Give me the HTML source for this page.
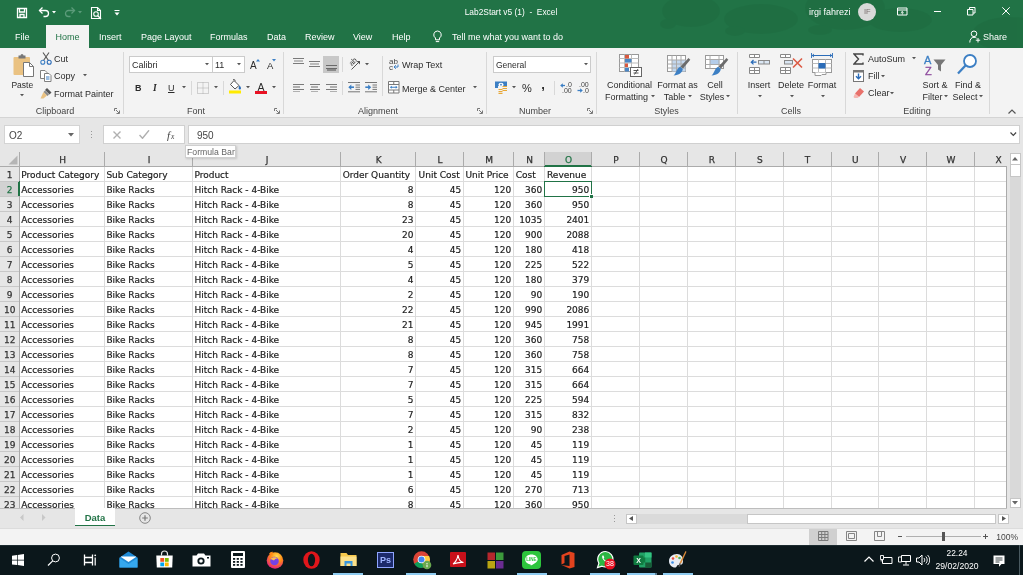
<!DOCTYPE html>
<html><head><meta charset="utf-8"><title>Lab2Start v5 (1) - Excel</title><style>
html,body{margin:0;padding:0;}
body{width:1023px;height:575px;overflow:hidden;position:relative;background:#e6e6e6;font-family:"Liberation Sans",sans-serif;}
.t{position:absolute;white-space:pre;}
.r{position:absolute;display:block;}
#w{position:absolute;left:0;top:0;width:1023px;height:575px;overflow:hidden;will-change:transform;opacity:0.999;}
</style></head><body><div id="w">
<div class="r" style="left:0px;top:0px;width:1023px;height:48px;background:#217346;"></div>
<svg class="r" style="left:0;top:0" width="1023" height="48" viewBox="0 0 1023 48"><g fill="#1d6a3f" opacity="0.450"><ellipse cx="691" cy="11" rx="29" ry="16"/><ellipse cx="668" cy="24" rx="8" ry="5"/><ellipse cx="761" cy="19" rx="37" ry="15"/><ellipse cx="735" cy="31" rx="10" ry="5"/><ellipse cx="845" cy="8" rx="40" ry="22"/><ellipse cx="900" cy="20" rx="32" ry="12"/><ellipse cx="820" cy="30" rx="12" ry="5"/><ellipse cx="1010" cy="34" rx="38" ry="17"/></g></svg>
<svg class="r" style="left:16px;top:7px;" width="12" height="12" viewBox="0 0 12 12"><path d="M1.5 1.5h9v9h-9z M3.5 1.5v3.5h5v-3.5 M4 10.5v-3h4v3" fill="none" stroke="#fff" stroke-width="1.300"/></svg>
<svg class="r" style="left:38px;top:6px;" width="13" height="12" viewBox="0 0 13 12"><path d="M1.5 4.5h6a3 3 0 0 1 0 6h-2" fill="none" stroke="#fff" stroke-width="1.3"/><path d="M4.5 1.5l-3 3 3 3" fill="none" stroke="#fff" stroke-width="1.3"/></svg>
<svg class="r" style="left:52px;top:11px;" width="5" height="3" viewBox="0 0 5 3"><path d="M0 0h4l-2 2.5z" fill="#fff"/></svg>
<svg class="r" style="left:63px;top:6px;" width="13" height="12" viewBox="0 0 13 12"><path d="M11.5 4.5h-6a3 3 0 0 0 0 6h2" fill="none" stroke="#5b9b7a" stroke-width="1.3"/><path d="M8.5 1.5l3 3-3 3" fill="none" stroke="#5b9b7a" stroke-width="1.3"/></svg>
<svg class="r" style="left:78px;top:11px;" width="5" height="3" viewBox="0 0 5 3"><path d="M0 0h4l-2 2.5z" fill="#5b9b7a"/></svg>
<svg class="r" style="left:90px;top:6px;" width="13" height="14" viewBox="0 0 13 14"><path d="M1.5 1.5h6l3 3v8h-9z M7.5 1.5v3h3" fill="none" stroke="#fff" stroke-width="1.1"/><circle cx="6" cy="8" r="2.3" fill="none" stroke="#fff" stroke-width="1.1"/><path d="M7.8 9.8l3.2 3.2" stroke="#fff" stroke-width="1.3"/></svg>
<svg class="r" style="left:114px;top:10px;" width="6" height="6" viewBox="0 0 6 6"><path d="M0.5 0.5h5" stroke="#fff" stroke-width="1"/><path d="M0.5 2.5h5l-2.5 3z" fill="#fff"/></svg>
<div class="t" style="top:6.00px;font-size:8.4px;line-height:12px;color:#fff;left:411.00px;width:200px;text-align:center;">Lab2Start v5 (1)  -  Excel</div>
<div class="t" style="top:6.00px;font-size:9px;line-height:12px;color:#fff;left:809.00px;">irgi fahrezi</div>
<div class="r" style="left:858px;top:3px;width:18px;height:18px;border-radius:9px;background:#d9d9d9;"></div>
<div class="t" style="top:6.00px;font-size:7.5px;line-height:12px;color:#7a6e6e;left:767.30px;width:200px;text-align:center;">IF</div>
<svg class="r" style="left:896.5px;top:6.5px;" width="11" height="9" viewBox="0 0 11 9"><path d="M0.500 1h9.500v7h-9.500z M0.500 3h9.500" fill="none" stroke="#fff" stroke-width="1"/><path d="M5.250 4.500v3 M3.800 5.900l1.450-1.400 1.450 1.400" fill="none" stroke="#fff" stroke-width="0.900"/></svg>
<div class="r" style="left:933.5px;top:10.5px;width:7.5px;height:1px;background:#fff;"></div>
<svg class="r" style="left:967px;top:6.8px;" width="9" height="9" viewBox="0 0 9 9"><path d="M0.500 2.500h5.500v5.500h-5.500z M2.500 2.500v-2h5.500v5.500h-2" fill="none" stroke="#fff" stroke-width="1"/></svg>
<svg class="r" style="left:1002px;top:7.3px;" width="8" height="8" viewBox="0 0 8 8"><path d="M0.300 0.300l7.400 7.400M7.700 0.300l-7.400 7.400" stroke="#fff" stroke-width="1"/></svg>
<div class="r" style="left:46px;top:25px;width:43px;height:23px;background:#f3f3f3;"></div>
<div class="t" style="top:31.00px;font-size:9px;line-height:12px;color:#fff;left:15.00px;">File</div>
<div class="t" style="top:31.00px;font-size:9px;line-height:12px;color:#fff;left:99.00px;">Insert</div>
<div class="t" style="top:31.00px;font-size:9px;line-height:12px;color:#fff;left:141.00px;">Page Layout</div>
<div class="t" style="top:31.00px;font-size:9px;line-height:12px;color:#fff;left:210.00px;">Formulas</div>
<div class="t" style="top:31.00px;font-size:9px;line-height:12px;color:#fff;left:267.00px;">Data</div>
<div class="t" style="top:31.00px;font-size:9px;line-height:12px;color:#fff;left:305.00px;">Review</div>
<div class="t" style="top:31.00px;font-size:9px;line-height:12px;color:#fff;left:353.00px;">View</div>
<div class="t" style="top:31.00px;font-size:9px;line-height:12px;color:#fff;left:392.00px;">Help</div>
<div class="t" style="top:31.00px;font-size:9px;line-height:12px;color:#217346;left:-32.50px;width:200px;text-align:center;">Home</div>
<svg class="r" style="left:432px;top:30px;" width="11" height="13" viewBox="0 0 11 13"><path d="M5.5 1a3.8 3.8 0 0 0-2 7v1.8h4v-1.8a3.8 3.8 0 0 0-2-7z M3.8 11.6h3.4" fill="none" stroke="#fff" stroke-width="1"/></svg>
<div class="t" style="top:31.00px;font-size:9px;line-height:12px;color:#fff;left:452.00px;">Tell me what you want to do</div>
<svg class="r" style="left:969px;top:30px;" width="12" height="13" viewBox="0 0 12 13"><circle cx="5" cy="3.8" r="2.8" fill="none" stroke="#fff" stroke-width="1"/><path d="M0.8 12.5c0-3.5 1.8-5.2 4.2-5.2 1 0 1.8 0.3 2.5 0.8" fill="none" stroke="#fff" stroke-width="1"/><path d="M9 8v4.5M6.8 10.2h4.4" stroke="#fff" stroke-width="1"/></svg>
<div class="t" style="top:31.00px;font-size:9px;line-height:12px;color:#fff;left:983.00px;">Share</div>
<div class="r" style="left:0px;top:48px;width:1023px;height:69px;background:#f3f3f3;"></div>
<div class="r" style="left:0px;top:117px;width:1023px;height:1px;background:#d4d4d4;"></div>
<div class="r" style="left:0px;top:118px;width:1023px;height:34px;background:#e6e6e6;"></div>
<div class="r" style="left:4px;top:125px;width:76px;height:19px;background:#fff;border:1px solid #d4d4d4;box-sizing:border-box;"></div>
<div class="t" style="top:130.00px;font-size:10px;line-height:12px;color:#444;left:9.00px;-webkit-text-stroke:0;">O2</div>
<svg class="r" style="left:68px;top:133px;" width="6" height="4" viewBox="0 0 6 4"><path d="M0 0h6l-3 3.5z" fill="#666"/></svg>
<div class="r" style="left:91px;top:131px;width:1px;height:1px;background:#999;"></div>
<div class="r" style="left:91px;top:134px;width:1px;height:1px;background:#999;"></div>
<div class="r" style="left:91px;top:137px;width:1px;height:1px;background:#999;"></div>
<div class="r" style="left:103px;top:125px;width:82px;height:19px;background:#fff;border:1px solid #d0d0d0;box-sizing:border-box;"></div>
<svg class="r" style="left:113px;top:131px;" width="8" height="8" viewBox="0 0 8 8"><path d="M0.5 0.5l7 7M7.5 0.5l-7 7" stroke="#b0b0b0" stroke-width="1.400"/></svg>
<svg class="r" style="left:139px;top:130px;" width="11" height="9" viewBox="0 0 11 9"><path d="M0.500 5l3 3.300 6.500-8" fill="none" stroke="#b0b0b0" stroke-width="1.400"/></svg>
<div class="t" style="top:129.00px;font-size:11px;line-height:12px;color:#444;left:167.00px;font-family:'Liberation Serif',serif;font-style:italic;">f</div>
<div class="t" style="top:131.00px;font-size:7.5px;line-height:12px;color:#444;left:171.00px;font-family:'Liberation Serif',serif;font-style:italic;">x</div>
<div class="r" style="left:188px;top:125px;width:832px;height:19px;background:#fff;border:1px solid #d0d0d0;box-sizing:border-box;"></div>
<div class="t" style="top:130.00px;font-size:10px;line-height:12px;color:#444;left:197.00px;-webkit-text-stroke:0;">950</div>
<svg class="r" style="left:1009.5px;top:132px;" width="7" height="5" viewBox="0 0 7 5"><path d="M0.500 0.500l2.800 2.800 2.800-2.800" fill="none" stroke="#444" stroke-width="1.200"/></svg>
<div class="r" style="left:123px;top:52px;width:1px;height:62px;background:#d8d8d8;"></div>
<div class="r" style="left:283px;top:52px;width:1px;height:62px;background:#d8d8d8;"></div>
<div class="r" style="left:486px;top:52px;width:1px;height:62px;background:#d8d8d8;"></div>
<div class="r" style="left:596px;top:52px;width:1px;height:62px;background:#d8d8d8;"></div>
<div class="r" style="left:737px;top:52px;width:1px;height:62px;background:#d8d8d8;"></div>
<div class="r" style="left:845px;top:52px;width:1px;height:62px;background:#d8d8d8;"></div>
<div class="r" style="left:989px;top:52px;width:1px;height:62px;background:#d8d8d8;"></div>
<div class="t" style="top:105.00px;font-size:9px;line-height:12px;color:#444;left:-45.00px;width:200px;text-align:center;">Clipboard</div>
<div class="t" style="top:105.00px;font-size:9px;line-height:12px;color:#444;left:96.00px;width:200px;text-align:center;">Font</div>
<div class="t" style="top:105.00px;font-size:9px;line-height:12px;color:#444;left:278.00px;width:200px;text-align:center;">Alignment</div>
<div class="t" style="top:105.00px;font-size:9px;line-height:12px;color:#444;left:435.00px;width:200px;text-align:center;">Number</div>
<div class="t" style="top:105.00px;font-size:9px;line-height:12px;color:#444;left:566.50px;width:200px;text-align:center;">Styles</div>
<div class="t" style="top:105.00px;font-size:9px;line-height:12px;color:#444;left:691.00px;width:200px;text-align:center;">Cells</div>
<div class="t" style="top:105.00px;font-size:9px;line-height:12px;color:#444;left:817.00px;width:200px;text-align:center;">Editing</div>
<svg class="r" style="left:114px;top:108px;" width="6" height="6" viewBox="0 0 6 6"><path d="M0.5 3v-2.5h2.5" fill="none" stroke="#777" stroke-width="1"/><path d="M2 2l3 3M5.5 2.5v3h-3" fill="none" stroke="#777" stroke-width="1"/></svg>
<svg class="r" style="left:274px;top:108px;" width="6" height="6" viewBox="0 0 6 6"><path d="M0.5 3v-2.5h2.5" fill="none" stroke="#777" stroke-width="1"/><path d="M2 2l3 3M5.5 2.5v3h-3" fill="none" stroke="#777" stroke-width="1"/></svg>
<svg class="r" style="left:477px;top:108px;" width="6" height="6" viewBox="0 0 6 6"><path d="M0.5 3v-2.5h2.5" fill="none" stroke="#777" stroke-width="1"/><path d="M2 2l3 3M5.5 2.5v3h-3" fill="none" stroke="#777" stroke-width="1"/></svg>
<svg class="r" style="left:587px;top:108px;" width="6" height="6" viewBox="0 0 6 6"><path d="M0.5 3v-2.5h2.5" fill="none" stroke="#777" stroke-width="1"/><path d="M2 2l3 3M5.5 2.5v3h-3" fill="none" stroke="#777" stroke-width="1"/></svg>
<svg class="r" style="left:1008px;top:109px;" width="8" height="5" viewBox="0 0 8 5"><path d="M0.5 4.5l3.5-3.5 3.5 3.5" fill="none" stroke="#555" stroke-width="1.2"/></svg>
<svg class="r" style="left:13px;top:53px;" width="22" height="25" viewBox="0 0 22 25"><rect x="0.500" y="4" width="16.500" height="18" rx="1" fill="#eac282"/>
<path d="M5.500 5.500v-3h2a1.500 1.500 0 0 1 3 0h2v3z" fill="#777"/>
<path d="M10.500 9.500h6l4 4v10h-10z" fill="#fff" stroke="#777" stroke-width="1"/><path d="M16.500 9.500v4h4" fill="none" stroke="#777" stroke-width="1"/></svg>
<div class="t" style="top:79.00px;font-size:8.5px;line-height:12px;color:#2b2b2b;left:-77.70px;width:200px;text-align:center;">Paste</div>
<svg class="r" style="left:19.5px;top:94.2px;" width="4" height="2.5" viewBox="0 0 4 2.5"><path d="M0 0h4l-2 2.300z" fill="#555"/></svg>
<svg class="r" style="left:40px;top:52px;" width="12" height="13" viewBox="0 0 12 13"><path d="M3 0.5l5.5 8M9 0.5l-5.5 8" stroke="#555" stroke-width="1.1" fill="none"/>
<circle cx="2.8" cy="10.2" r="2" fill="none" stroke="#3c7fc4" stroke-width="1.1"/><circle cx="9.2" cy="10.2" r="2" fill="none" stroke="#2b6cb8" stroke-width="1.1"/></svg>
<div class="t" style="top:53.00px;font-size:9px;line-height:12px;color:#2b2b2b;left:54.00px;">Cut</div>
<svg class="r" style="left:40px;top:70px;" width="12" height="13" viewBox="0 0 12 13"><path d="M0.500 0.500h4.500l2 2v6h-6.500z" fill="#fff" stroke="#808080" stroke-width="1"/>
<path d="M4.500 3.500h4.500l2 2v6h-6.500z" fill="#fff" stroke="#808080" stroke-width="1"/><path d="M6 7h3.500M6 9h3.500" stroke="#3c7fc4" stroke-width="1"/></svg>
<div class="t" style="top:70.00px;font-size:9px;line-height:12px;color:#2b2b2b;left:54.00px;">Copy</div>
<svg class="r" style="left:82.5px;top:74.2px;" width="4" height="2.5" viewBox="0 0 4 2.5"><path d="M0 0h4l-2 2.300z" fill="#555"/></svg>
<svg class="r" style="left:40px;top:87px;" width="13" height="12" viewBox="0 0 13 12"><path d="M7 1l4.5 4.5-2 2L5 3z" fill="#555"/><path d="M5 3.5l4 4-1.5 1.5-4-4z" fill="#888"/><path d="M3.5 5l3.5 3.5-3.5 3h-3z" fill="#eac282"/></svg>
<div class="t" style="top:88.00px;font-size:9px;line-height:12px;color:#2b2b2b;left:54.00px;">Format Painter</div>
<div class="r" style="left:129px;top:56px;width:84px;height:17px;background:#fff;border:1px solid #cbcbcb;box-sizing:border-box;"></div>
<div class="r" style="left:213px;top:56px;width:32px;height:17px;background:#fff;border:1px solid #cbcbcb;border-left:none;box-sizing:border-box;"></div>
<div class="t" style="top:59.00px;font-size:9px;line-height:12px;color:#2b2b2b;left:132.00px;">Calibri</div>
<svg class="r" style="left:204.5px;top:63.2px;" width="4" height="2.5" viewBox="0 0 4 2.5"><path d="M0 0h4l-2 2.300z" fill="#555"/></svg>
<div class="t" style="top:59.00px;font-size:9px;line-height:12px;color:#2b2b2b;left:215.00px;">11</div>
<svg class="r" style="left:236.5px;top:63.2px;" width="4" height="2.5" viewBox="0 0 4 2.5"><path d="M0 0h4l-2 2.300z" fill="#555"/></svg>
<div class="t" style="top:60.00px;font-size:10px;line-height:12px;color:#2b2b2b;left:250.00px;">A</div>
<svg class="r" style="left:255.8px;top:59.3px;" width="4" height="2.5" viewBox="0 0 4 2.5"><path d="M0 2.500l2-2.500 2 2.500z" fill="#3c7fc4"/></svg>
<div class="t" style="top:60.00px;font-size:9.5px;line-height:12px;color:#2b2b2b;left:267.00px;">A</div>
<svg class="r" style="left:271.8px;top:59.3px;" width="4" height="2.5" viewBox="0 0 4 2.5"><path d="M0 0h4l-2 2.500z" fill="#3c7fc4"/></svg>
<div class="t" style="top:82.00px;font-size:9px;line-height:12px;color:#2b2b2b;left:135.00px;font-weight:bold;">B</div>
<div class="t" style="top:82.00px;font-size:9.5px;line-height:12px;color:#2b2b2b;left:153.00px;font-family:'Liberation Serif',serif;font-style:italic;font-weight:bold;">I</div>
<div class="t" style="top:82.00px;font-size:9px;line-height:12px;color:#2b2b2b;left:168.00px;text-decoration:underline;">U</div>
<svg class="r" style="left:181.5px;top:86.2px;" width="4" height="2.5" viewBox="0 0 4 2.5"><path d="M0 0h4l-2 2.300z" fill="#555"/></svg>
<div class="r" style="left:191px;top:81px;width:1px;height:14px;background:#d8d8d8;"></div>
<svg class="r" style="left:197px;top:82px;" width="12" height="12" viewBox="0 0 12 12"><path d="M0.5 0.5h11v11h-11z M6 0.5v11 M0.5 6h11" fill="none" stroke="#aaa" stroke-width="1" stroke-dasharray="1 1"/></svg>
<svg class="r" style="left:213.5px;top:86.2px;" width="4" height="2.5" viewBox="0 0 4 2.5"><path d="M0 0h4l-2 2.300z" fill="#555"/></svg>
<div class="r" style="left:223px;top:81px;width:1px;height:14px;background:#d8d8d8;"></div>
<svg class="r" style="left:229px;top:79px;" width="13" height="15" viewBox="0 0 13 15"><path d="M5 1.5l5 5-4 3.5-4.500-4.500z" fill="#fff" stroke="#555" stroke-width="1"/><path d="M4 0.500c1.500-0.5 2.500 0.500 2 2" fill="none" stroke="#555" stroke-width="0.9"/><path d="M10.500 6.500c1 1.200 1.500 2 1.500 2.800a1.200 1.200 0 0 1-2.400 0c0-0.800 0.400-1.600 0.900-2.800z" fill="#2b6cb8"/><rect x="0" y="11.500" width="12" height="3" fill="#ffeb00"/></svg>
<svg class="r" style="left:245.5px;top:86.2px;" width="4" height="2.5" viewBox="0 0 4 2.5"><path d="M0 0h4l-2 2.300z" fill="#555"/></svg>
<div class="t" style="top:81.00px;font-size:10.5px;line-height:12px;color:#2b2b2b;left:161.00px;width:200px;text-align:center;">A</div>
<div class="r" style="left:255px;top:90.7px;width:12px;height:3px;background:#e81123;"></div>
<svg class="r" style="left:271.5px;top:86.2px;" width="4" height="2.5" viewBox="0 0 4 2.5"><path d="M0 0h4l-2 2.300z" fill="#555"/></svg>
<div class="r" style="left:293px;top:58px;width:10.5px;height:1px;background:#7a7a7a;"></div><div class="r" style="left:294px;top:60px;width:8.5px;height:2px;background:#bcbcbc;"></div><div class="r" style="left:293px;top:63px;width:10.5px;height:1px;background:#7a7a7a;"></div>
<div class="r" style="left:309px;top:61px;width:10.5px;height:1px;background:#7a7a7a;"></div><div class="r" style="left:310px;top:63px;width:8.5px;height:2px;background:#bcbcbc;"></div><div class="r" style="left:309px;top:66px;width:10.5px;height:1px;background:#7a7a7a;"></div>
<div class="r" style="left:323px;top:56px;width:16px;height:17px;background:#c8c8c8;"></div>
<div class="r" style="left:325.5px;top:65px;width:11px;height:1px;background:#6a6a6a;"></div><div class="r" style="left:325.5px;top:67.5px;width:11px;height:1px;background:#6a6a6a;"></div><div class="r" style="left:326.5px;top:69px;width:9px;height:2px;background:#8a8a8a;"></div>
<div class="r" style="left:342px;top:57px;width:1px;height:15px;background:#d8d8d8;"></div>
<div class="t" style="top:58.00px;font-size:7.5px;line-height:8px;color:#444;left:349.00px;transform:rotate(-45deg);transform-origin:50% 50%;">ab</div>
<svg class="r" style="left:348px;top:57px;" width="14" height="14" viewBox="0 0 14 14"><path d="M3.500 12.500l8-8" stroke="#555" stroke-width="1"/><path d="M12 7.500v-3.500h-3.500z" fill="#555"/></svg>
<svg class="r" style="left:364.5px;top:63.2px;" width="4" height="2.5" viewBox="0 0 4 2.5"><path d="M0 0h4l-2 2.300z" fill="#555"/></svg>
<div class="r" style="left:382px;top:56px;width:1px;height:40px;background:#d8d8d8;"></div>
<div class="t" style="top:58.00px;font-size:8px;line-height:7px;color:#444;left:389.00px;">ab</div>
<div class="t" style="top:64.00px;font-size:8px;line-height:7px;color:#444;left:389.00px;">c</div>
<svg class="r" style="left:393px;top:64px;" width="6" height="6" viewBox="0 0 6 6"><path d="M5 0.500v2.500h-3.500" fill="none" stroke="#3c7fc4" stroke-width="1"/><path d="M2.800 1.200l-1.800 1.800 1.800 1.800" fill="none" stroke="#3c7fc4" stroke-width="1"/></svg>
<div class="t" style="top:59.00px;font-size:9px;line-height:12px;color:#2b2b2b;left:402.00px;">Wrap Text</div>
<div class="r" style="left:293px;top:84.0px;width:10.5px;height:1px;background:#7a7a7a;"></div><div class="r" style="left:293px;top:86.25px;width:7px;height:1.3px;background:#b0b0b0;"></div><div class="r" style="left:293px;top:88.5px;width:10.5px;height:1px;background:#7a7a7a;"></div><div class="r" style="left:293px;top:90.75px;width:7px;height:1.5px;background:#b0b0b0;"></div>
<div class="r" style="left:309.5px;top:84.0px;width:10.5px;height:1px;background:#7a7a7a;"></div><div class="r" style="left:311.25px;top:86.25px;width:7px;height:1.3px;background:#b0b0b0;"></div><div class="r" style="left:309.5px;top:88.5px;width:10.5px;height:1px;background:#7a7a7a;"></div><div class="r" style="left:311.25px;top:90.75px;width:7px;height:1.5px;background:#b0b0b0;"></div>
<div class="r" style="left:326.0px;top:84.0px;width:10.5px;height:1px;background:#7a7a7a;"></div><div class="r" style="left:329.5px;top:86.25px;width:7px;height:1.3px;background:#b0b0b0;"></div><div class="r" style="left:326.0px;top:88.5px;width:10.5px;height:1px;background:#7a7a7a;"></div><div class="r" style="left:329.5px;top:90.75px;width:7px;height:1.5px;background:#b0b0b0;"></div>
<div class="r" style="left:342px;top:81px;width:1px;height:14px;background:#d8d8d8;"></div>
<svg class="r" style="left:348px;top:82px;" width="12" height="11" viewBox="0 0 12 11"><path d="M0 0.500h12M7.500 3h4.500M7.500 5.200h4.500M7.500 7.400h4.500M0 9.800h12" stroke="#777" stroke-width="1"/><path d="M6 5.200h-4.500" stroke="#3c7fc4" stroke-width="1.600"/><path d="M3.300 2.500l-3 2.700 3 2.700z" fill="#3c7fc4"/></svg>
<svg class="r" style="left:365px;top:82px;" width="12" height="11" viewBox="0 0 12 11"><path d="M0 0.500h12M7.500 3h4.500M7.500 5.200h4.500M7.500 7.400h4.500M0 9.800h12" stroke="#777" stroke-width="1"/><path d="M0.300 5.200h4.500" stroke="#3c7fc4" stroke-width="1.600"/><path d="M3.200 2.500l3 2.700-3 2.700z" fill="#3c7fc4"/></svg>
<svg class="r" style="left:388px;top:81px;" width="12" height="13" viewBox="0 0 12 13"><path d="M0.500 0.500h10.500v11.500h-10.500z M0.500 3.500h10.500 M0.500 9h10.500 M5.750 0.500v3 M5.750 9v3" fill="#fff" stroke="#7a7a7a" stroke-width="1"/><path d="M2.500 6.250h6.500" stroke="#3c7fc4" stroke-width="1"/><path d="M3.800 4.700l-1.800 1.550 1.800 1.550zM7.700 4.700l1.800 1.550-1.800 1.550z" fill="#3c7fc4"/></svg>
<div class="t" style="top:83.00px;font-size:9px;line-height:12px;color:#2b2b2b;left:402.00px;">Merge &amp; Center</div>
<svg class="r" style="left:472.5px;top:86.2px;" width="4" height="2.5" viewBox="0 0 4 2.5"><path d="M0 0h4l-2 2.300z" fill="#555"/></svg>
<div class="r" style="left:493px;top:56px;width:98px;height:17px;background:#fff;border:1px solid #cbcbcb;box-sizing:border-box;"></div>
<div class="t" style="top:59.00px;font-size:8.5px;line-height:12px;color:#2b2b2b;left:496.00px;">General</div>
<svg class="r" style="left:583.5px;top:63.2px;" width="4" height="2.5" viewBox="0 0 4 2.5"><path d="M0 0h4l-2 2.300z" fill="#555"/></svg>
<svg class="r" style="left:495px;top:81px;" width="13" height="13" viewBox="0 0 13 13"><rect x="0" y="0.500" width="12" height="6.500" fill="#3c7fc4"/><ellipse cx="6" cy="3.700" rx="2.600" ry="2" fill="#fff"/><circle cx="6" cy="3.700" r="0.900" fill="#3c7fc4"/><rect x="3" y="5" width="9" height="7.500" fill="#f3f3f3"/><path d="M7.500 5.500h4.500M7.500 7.500h4.500M7.500 9.500h4.500M3.500 8.500h4M3.500 10.500h4M3.500 12.300h4" stroke="#e8a838" stroke-width="1.200"/></svg>
<svg class="r" style="left:511.5px;top:86.2px;" width="4" height="2.5" viewBox="0 0 4 2.5"><path d="M0 0h4l-2 2.300z" fill="#555"/></svg>
<div class="t" style="top:82.00px;font-size:11px;line-height:12px;color:#2b2b2b;left:427.00px;width:200px;text-align:center;">%</div>
<div class="t" style="top:79.00px;font-size:13px;line-height:12px;color:#2b2b2b;left:443.00px;width:200px;text-align:center;font-weight:bold;">,</div>
<div class="r" style="left:554px;top:81px;width:1px;height:14px;background:#d8d8d8;"></div>
<svg class="r" style="left:560px;top:82.5px;" width="6" height="5" viewBox="0 0 6 5"><path d="M5 2.500h-3.500" stroke="#3c7fc4" stroke-width="1.300"/><path d="M2.800 0.300l-2.600 2.200 2.600 2.200z" fill="#3c7fc4"/></svg>
<div class="t" style="top:82.00px;font-size:7px;line-height:6px;color:#444;left:566.00px;-webkit-text-stroke:0;">.0</div>
<div class="t" style="top:88.00px;font-size:7px;line-height:6px;color:#444;left:562.00px;-webkit-text-stroke:0;">.00</div>
<svg class="r" style="left:576.5px;top:88px;" width="6" height="5" viewBox="0 0 6 5"><path d="M0.500 2.500h3.500" stroke="#3c7fc4" stroke-width="1.300"/><path d="M3.200 0.300l2.600 2.200-2.600 2.200z" fill="#3c7fc4"/></svg>
<div class="t" style="top:82.00px;font-size:7px;line-height:6px;color:#444;left:579.00px;-webkit-text-stroke:0;">.00</div>
<div class="t" style="top:88.00px;font-size:7px;line-height:6px;color:#444;left:583.00px;-webkit-text-stroke:0;">.0</div>
<svg class="r" style="left:619px;top:54px;" width="24" height="23" viewBox="0 0 24 23"><rect x="0.500" y="0.500" width="19" height="17" fill="#fff" stroke="#999"/>
<path d="M0.500 4.500h19M0.500 9h19M0.500 13.500h19M5.500 0.500v17M12.500 0.500v17" stroke="#bbb" stroke-width="1" fill="none"/>
<rect x="6" y="1" width="4" height="3.500" fill="#d9593f"/><rect x="6" y="5" width="6.500" height="3.500" fill="#4a86c5"/><rect x="6" y="9.500" width="3" height="3.500" fill="#d9593f"/><rect x="6" y="14" width="4" height="3.500" fill="#4a86c5"/>
<rect x="11.500" y="13.500" width="11" height="9" fill="#fff" stroke="#666"/><path d="M14.500 16.500h5M14.500 19h5M19 15l-3.500 5.500" stroke="#444" stroke-width="0.900"/></svg>
<div class="t" style="top:79.00px;font-size:9px;line-height:12px;color:#2b2b2b;left:529.50px;width:200px;text-align:center;">Conditional</div>
<div class="t" style="top:91.00px;font-size:9px;line-height:12px;color:#2b2b2b;left:526.50px;width:200px;text-align:center;">Formatting</div>
<svg class="r" style="left:650.5px;top:95.2px;" width="4" height="2.5" viewBox="0 0 4 2.5"><path d="M0 0h4l-2 2.300z" fill="#555"/></svg>
<svg class="r" style="left:667px;top:54px;" width="24" height="23" viewBox="0 0 24 23"><rect x="0.500" y="1.500" width="18" height="16" fill="#fff" stroke="#999"/>
<rect x="5" y="6" width="13.500" height="11.500" fill="#c3d7ee"/>
<path d="M0.500 6h18M0.500 10h18M0.500 14h18M5 1.500v16M9.500 1.500v16M14 1.500v16" stroke="#aaa" stroke-width="1" fill="none"/>
<path d="M21.500 4l1.800 1.800-7.300 8.700-2.500-2z" fill="#6b6b6b"/><path d="M13.200 12.800l2.600 2.200c-0.500 3.500-3.500 6-9.300 6.500 2.500-1.500 3-7 6.700-8.700z" fill="#3c7fc4"/></svg>
<div class="t" style="top:79.00px;font-size:9px;line-height:12px;color:#2b2b2b;left:577.50px;width:200px;text-align:center;">Format as</div>
<div class="t" style="top:91.00px;font-size:9px;line-height:12px;color:#2b2b2b;left:574.50px;width:200px;text-align:center;">Table</div>
<svg class="r" style="left:687.5px;top:95.2px;" width="4" height="2.5" viewBox="0 0 4 2.5"><path d="M0 0h4l-2 2.300z" fill="#555"/></svg>
<svg class="r" style="left:705px;top:54px;" width="24" height="23" viewBox="0 0 24 23"><rect x="0.500" y="1.500" width="18" height="13" fill="#fff" stroke="#999"/>
<rect x="5" y="5" width="9.500" height="6" fill="#b4cdea"/>
<path d="M0.500 5.500h18M0.500 10.500h18M5 1.500v13M14 1.500v13" stroke="#aaa" stroke-width="1" fill="none"/>
<path d="M21.500 4l1.800 1.800-7.300 8.700-2.500-2z" fill="#6b6b6b"/><path d="M13.200 12.800l2.600 2.200c-0.500 3.500-3.500 6-9.300 6.500 2.500-1.500 3-7 6.700-8.700z" fill="#3c7fc4"/></svg>
<div class="t" style="top:79.00px;font-size:9px;line-height:12px;color:#2b2b2b;left:615.00px;width:200px;text-align:center;">Cell</div>
<div class="t" style="top:91.00px;font-size:9px;line-height:12px;color:#2b2b2b;left:612.00px;width:200px;text-align:center;">Styles</div>
<svg class="r" style="left:726.0px;top:95.2px;" width="4" height="2.5" viewBox="0 0 4 2.5"><path d="M0 0h4l-2 2.300z" fill="#555"/></svg>
<svg class="r" style="left:749px;top:54px;" width="22" height="21" viewBox="0 0 22 21"><path d="M0.500 0.500h10v3h-10z M5.500 0.500v3 M0.500 13.500h10v6h-10z M5.500 13.500v6 M0.500 16.500h10" fill="#fff" stroke="#888"/>
<rect x="9.500" y="6.500" width="11" height="3.500" fill="#dbe7f4" stroke="#888"/><path d="M15 6.500v3.500" stroke="#888"/>
<path d="M7.500 8.200h-5M4.500 6l-2.200 2.200 2.200 2.200" fill="none" stroke="#2b6cb8" stroke-width="1.300"/></svg>
<div class="t" style="top:79.00px;font-size:9px;line-height:12px;color:#2b2b2b;left:659.00px;width:200px;text-align:center;">Insert</div>
<svg class="r" style="left:757.5px;top:95.2px;" width="4" height="2.5" viewBox="0 0 4 2.5"><path d="M0 0h4l-2 2.300z" fill="#555"/></svg>
<svg class="r" style="left:780px;top:54px;" width="23" height="21" viewBox="0 0 23 21"><path d="M0.500 0.500h10v3h-10z M5.500 0.500v3 M0.500 13.500h10v6h-10z M5.500 13.500v6 M0.500 16.500h10" fill="#fff" stroke="#888"/>
<rect x="4.500" y="6.500" width="8" height="3.500" fill="#dbe7f4" stroke="#888"/>
<path d="M13 4.500l9 9M22 4.500l-9 9" stroke="#dc5b45" stroke-width="1.600"/></svg>
<div class="t" style="top:79.00px;font-size:9px;line-height:12px;color:#2b2b2b;left:691.00px;width:200px;text-align:center;">Delete</div>
<svg class="r" style="left:789.5px;top:95.2px;" width="4" height="2.5" viewBox="0 0 4 2.5"><path d="M0 0h4l-2 2.300z" fill="#555"/></svg>
<svg class="r" style="left:811px;top:53px;" width="23" height="23" viewBox="0 0 23 23"><path d="M1 2.500h20" stroke="#2b6cb8" stroke-width="1"/><path d="M3 1l-1.800 1.500 1.800 1.500M19 1l1.800 1.500-1.800 1.500M0.500 0v5M21.500 0v5" fill="none" stroke="#2b6cb8" stroke-width="0.900"/>
<rect x="1.500" y="6.500" width="19" height="13" fill="#fff" stroke="#999"/><path d="M1.500 10.500h19M1.500 15h19M7.500 6.500v13M14.500 6.500v13" stroke="#bbb" fill="none"/>
<rect x="7.500" y="10" width="7" height="5.500" fill="#2b6cb8"/><path d="M4 19.500v3h6l1-1h4v-2" fill="#fff" stroke="#999"/></svg>
<div class="t" style="top:79.00px;font-size:9px;line-height:12px;color:#2b2b2b;left:722.00px;width:200px;text-align:center;">Format</div>
<svg class="r" style="left:820.5px;top:95.2px;" width="4" height="2.5" viewBox="0 0 4 2.5"><path d="M0 0h4l-2 2.300z" fill="#555"/></svg>
<svg class="r" style="left:853px;top:53px;" width="11" height="12" viewBox="0 0 11 12"><path d="M10 2.500v-1.500h-9l4.500 5-4.500 5h9v-1.500" fill="none" stroke="#444" stroke-width="1.400"/></svg>
<div class="t" style="top:53.00px;font-size:9px;line-height:12px;color:#2b2b2b;left:868.00px;">AutoSum</div>
<svg class="r" style="left:911.5px;top:57.2px;" width="4" height="2.5" viewBox="0 0 4 2.5"><path d="M0 0h4l-2 2.300z" fill="#555"/></svg>
<svg class="r" style="left:853px;top:70px;" width="11" height="12" viewBox="0 0 11 12"><rect x="0.500" y="0.500" width="10" height="11" fill="#fff" stroke="#777"/><rect x="0" y="0" width="11" height="2.500" fill="#777"/><path d="M5.500 3.500v5M3 6.200l2.500 2.500 2.500-2.500" fill="none" stroke="#2b6cb8" stroke-width="1.400"/></svg>
<div class="t" style="top:70.00px;font-size:9px;line-height:12px;color:#2b2b2b;left:868.00px;">Fill</div>
<svg class="r" style="left:881.0px;top:75.2px;" width="4" height="2.5" viewBox="0 0 4 2.5"><path d="M0 0h4l-2 2.300z" fill="#555"/></svg>
<svg class="r" style="left:853px;top:87px;" width="12" height="11" viewBox="0 0 12 11"><path d="M7 1l4 3.500-5 5.500-4-3.500z" fill="#e8706a"/><path d="M2 6.500l4 3.500-1.500 1h-3l-1-1z" fill="#f5b5b0"/></svg>
<div class="t" style="top:87.00px;font-size:9px;line-height:12px;color:#2b2b2b;left:868.00px;">Clear</div>
<svg class="r" style="left:890.0px;top:92.2px;" width="4" height="2.5" viewBox="0 0 4 2.5"><path d="M0 0h4l-2 2.300z" fill="#555"/></svg>
<div class="t" style="top:55.00px;font-size:11px;line-height:10px;color:#3c7fc4;left:924.00px;-webkit-text-stroke:0.300px;">A</div>
<div class="t" style="top:66.00px;font-size:11px;line-height:10px;color:#8e4b9e;left:925.00px;-webkit-text-stroke:0.300px;">Z</div>
<svg class="r" style="left:933px;top:59px;" width="14" height="14" viewBox="0 0 14 14"><path d="M0.500 0.500h12l-4.500 5.500v6.500l-3-2v-4.500z" fill="#777"/></svg>
<div class="t" style="top:79.00px;font-size:9px;line-height:12px;color:#2b2b2b;left:835.00px;width:200px;text-align:center;">Sort &amp;</div>
<div class="t" style="top:91.00px;font-size:9px;line-height:12px;color:#2b2b2b;left:832.50px;width:200px;text-align:center;">Filter</div>
<svg class="r" style="left:943.5px;top:95.2px;" width="4" height="2.5" viewBox="0 0 4 2.5"><path d="M0 0h4l-2 2.300z" fill="#555"/></svg>
<svg class="r" style="left:956px;top:53px;" width="23" height="23" viewBox="0 0 23 23"><circle cx="14" cy="8" r="6" fill="#fff" stroke="#3c7fc4" stroke-width="1.800"/><path d="M9.500 12.500l-7.500 8" stroke="#3c7fc4" stroke-width="2.200"/></svg>
<div class="t" style="top:79.00px;font-size:9px;line-height:12px;color:#2b2b2b;left:868.00px;width:200px;text-align:center;">Find &amp;</div>
<div class="t" style="top:91.00px;font-size:9px;line-height:12px;color:#2b2b2b;left:865.00px;width:200px;text-align:center;">Select</div>
<svg class="r" style="left:978.5px;top:95.2px;" width="4" height="2.5" viewBox="0 0 4 2.5"><path d="M0 0h4l-2 2.300z" fill="#555"/></svg>
<div class="r" style="left:20px;top:167px;width:987px;height:341px;background:#fff;"></div>
<div class="r" style="left:0px;top:152px;width:1007px;height:15px;background:#e6e6e6;"></div>
<div class="r" style="left:545px;top:152px;width:47px;height:14px;background:#d2d2d2;"></div>
<div class="r" style="left:544px;top:165px;width:48px;height:2px;background:#217346;"></div>
<div class="r" style="left:0px;top:166px;width:544px;height:1px;background:#ababab;"></div>
<div class="r" style="left:592px;top:166px;width:415px;height:1px;background:#ababab;"></div>
<div class="r" style="left:104px;top:152px;width:1px;height:14px;background:#ababab;"></div>
<div class="t" style="top:154.00px;font-size:9px;line-height:12px;color:#333;left:-37.25px;width:200px;text-align:center;font-family:'DejaVu Sans','Liberation Sans',sans-serif;-webkit-text-stroke:0.250px;">H</div>
<div class="r" style="left:192px;top:152px;width:1px;height:14px;background:#ababab;"></div>
<div class="t" style="top:154.00px;font-size:9px;line-height:12px;color:#333;left:49.00px;width:200px;text-align:center;font-family:'DejaVu Sans','Liberation Sans',sans-serif;-webkit-text-stroke:0.250px;">I</div>
<div class="r" style="left:340px;top:152px;width:1px;height:14px;background:#ababab;"></div>
<div class="t" style="top:154.00px;font-size:9px;line-height:12px;color:#333;left:167.00px;width:200px;text-align:center;font-family:'DejaVu Sans','Liberation Sans',sans-serif;-webkit-text-stroke:0.250px;">J</div>
<div class="r" style="left:415px;top:152px;width:1px;height:14px;background:#ababab;"></div>
<div class="t" style="top:154.00px;font-size:9px;line-height:12px;color:#333;left:278.60px;width:200px;text-align:center;font-family:'DejaVu Sans','Liberation Sans',sans-serif;-webkit-text-stroke:0.250px;">K</div>
<div class="r" style="left:463px;top:152px;width:1px;height:14px;background:#ababab;"></div>
<div class="t" style="top:154.00px;font-size:9px;line-height:12px;color:#333;left:340.10px;width:200px;text-align:center;font-family:'DejaVu Sans','Liberation Sans',sans-serif;-webkit-text-stroke:0.250px;">L</div>
<div class="r" style="left:513px;top:152px;width:1px;height:14px;background:#ababab;"></div>
<div class="t" style="top:154.00px;font-size:9px;line-height:12px;color:#333;left:389.05px;width:200px;text-align:center;font-family:'DejaVu Sans','Liberation Sans',sans-serif;-webkit-text-stroke:0.250px;">M</div>
<div class="r" style="left:544px;top:152px;width:1px;height:14px;background:#ababab;"></div>
<div class="t" style="top:154.00px;font-size:9px;line-height:12px;color:#333;left:429.55px;width:200px;text-align:center;font-family:'DejaVu Sans','Liberation Sans',sans-serif;-webkit-text-stroke:0.250px;">N</div>
<div class="r" style="left:591px;top:152px;width:1px;height:14px;background:#ababab;"></div>
<div class="t" style="top:154.00px;font-size:9px;line-height:12px;color:#217346;left:468.55px;width:200px;text-align:center;font-family:'DejaVu Sans','Liberation Sans',sans-serif;-webkit-text-stroke:0.250px;">O</div>
<div class="r" style="left:639px;top:152px;width:1px;height:14px;background:#ababab;"></div>
<div class="t" style="top:154.00px;font-size:9px;line-height:12px;color:#333;left:516.05px;width:200px;text-align:center;font-family:'DejaVu Sans','Liberation Sans',sans-serif;-webkit-text-stroke:0.250px;">P</div>
<div class="r" style="left:687px;top:152px;width:1px;height:14px;background:#ababab;"></div>
<div class="t" style="top:154.00px;font-size:9px;line-height:12px;color:#333;left:563.95px;width:200px;text-align:center;font-family:'DejaVu Sans','Liberation Sans',sans-serif;-webkit-text-stroke:0.250px;">Q</div>
<div class="r" style="left:735px;top:152px;width:1px;height:14px;background:#ababab;"></div>
<div class="t" style="top:154.00px;font-size:9px;line-height:12px;color:#333;left:611.85px;width:200px;text-align:center;font-family:'DejaVu Sans','Liberation Sans',sans-serif;-webkit-text-stroke:0.250px;">R</div>
<div class="r" style="left:783px;top:152px;width:1px;height:14px;background:#ababab;"></div>
<div class="t" style="top:154.00px;font-size:9px;line-height:12px;color:#333;left:659.75px;width:200px;text-align:center;font-family:'DejaVu Sans','Liberation Sans',sans-serif;-webkit-text-stroke:0.250px;">S</div>
<div class="r" style="left:831px;top:152px;width:1px;height:14px;background:#ababab;"></div>
<div class="t" style="top:154.00px;font-size:9px;line-height:12px;color:#333;left:707.60px;width:200px;text-align:center;font-family:'DejaVu Sans','Liberation Sans',sans-serif;-webkit-text-stroke:0.250px;">T</div>
<div class="r" style="left:878px;top:152px;width:1px;height:14px;background:#ababab;"></div>
<div class="t" style="top:154.00px;font-size:9px;line-height:12px;color:#333;left:755.40px;width:200px;text-align:center;font-family:'DejaVu Sans','Liberation Sans',sans-serif;-webkit-text-stroke:0.250px;">U</div>
<div class="r" style="left:926px;top:152px;width:1px;height:14px;background:#ababab;"></div>
<div class="t" style="top:154.00px;font-size:9px;line-height:12px;color:#333;left:803.20px;width:200px;text-align:center;font-family:'DejaVu Sans','Liberation Sans',sans-serif;-webkit-text-stroke:0.250px;">V</div>
<div class="r" style="left:974px;top:152px;width:1px;height:14px;background:#ababab;"></div>
<div class="t" style="top:154.00px;font-size:9px;line-height:12px;color:#333;left:851.00px;width:200px;text-align:center;font-family:'DejaVu Sans','Liberation Sans',sans-serif;-webkit-text-stroke:0.250px;">W</div>
<div class="r" style="left:1006px;top:152px;width:1px;height:14px;background:#e6e6e6;"></div>
<div class="t" style="top:154.00px;font-size:9px;line-height:12px;color:#333;left:898.50px;width:200px;text-align:center;font-family:'DejaVu Sans','Liberation Sans',sans-serif;-webkit-text-stroke:0.250px;">X</div>
<svg class="r" style="left:8px;top:155px;" width="10" height="10" viewBox="0 0 10 10"><path d="M9.500 0.500v9h-9z" fill="#b5b5b5"/></svg>
<div class="r" style="left:19px;top:152px;width:1px;height:14px;background:#ababab;"></div>
<div class="r" style="left:0px;top:167px;width:20px;height:341px;background:#e6e6e6;"></div>
<div class="r" style="left:0px;top:181px;width:19px;height:15px;background:#d2d2d2;"></div>
<div class="r" style="left:19px;top:167px;width:1px;height:341px;background:#ababab;"></div>
<div class="r" style="left:18px;top:181px;width:2px;height:15px;background:#217346;"></div>
<div class="r" style="left:104px;top:167px;width:1px;height:341px;background:#dcdcdc;"></div>
<div class="r" style="left:192px;top:167px;width:1px;height:341px;background:#dcdcdc;"></div>
<div class="r" style="left:340px;top:167px;width:1px;height:341px;background:#dcdcdc;"></div>
<div class="r" style="left:415px;top:167px;width:1px;height:341px;background:#dcdcdc;"></div>
<div class="r" style="left:463px;top:167px;width:1px;height:341px;background:#dcdcdc;"></div>
<div class="r" style="left:513px;top:167px;width:1px;height:341px;background:#dcdcdc;"></div>
<div class="r" style="left:544px;top:167px;width:1px;height:341px;background:#dcdcdc;"></div>
<div class="r" style="left:591px;top:167px;width:1px;height:341px;background:#dcdcdc;"></div>
<div class="r" style="left:639px;top:167px;width:1px;height:341px;background:#dcdcdc;"></div>
<div class="r" style="left:687px;top:167px;width:1px;height:341px;background:#dcdcdc;"></div>
<div class="r" style="left:735px;top:167px;width:1px;height:341px;background:#dcdcdc;"></div>
<div class="r" style="left:783px;top:167px;width:1px;height:341px;background:#dcdcdc;"></div>
<div class="r" style="left:831px;top:167px;width:1px;height:341px;background:#dcdcdc;"></div>
<div class="r" style="left:878px;top:167px;width:1px;height:341px;background:#dcdcdc;"></div>
<div class="r" style="left:926px;top:167px;width:1px;height:341px;background:#dcdcdc;"></div>
<div class="r" style="left:974px;top:167px;width:1px;height:341px;background:#dcdcdc;"></div>
<div class="r" style="left:1006px;top:167px;width:1px;height:341px;background:#ababab;"></div>
<div class="r" style="left:0px;top:181px;width:19px;height:1px;background:#c8c8c8;"></div>
<div class="r" style="left:20px;top:181px;width:986px;height:1px;background:#dcdcdc;"></div>
<div class="r" style="left:0px;top:196px;width:19px;height:1px;background:#c8c8c8;"></div>
<div class="r" style="left:20px;top:196px;width:986px;height:1px;background:#dcdcdc;"></div>
<div class="r" style="left:0px;top:211px;width:19px;height:1px;background:#c8c8c8;"></div>
<div class="r" style="left:20px;top:211px;width:986px;height:1px;background:#dcdcdc;"></div>
<div class="r" style="left:0px;top:226px;width:19px;height:1px;background:#c8c8c8;"></div>
<div class="r" style="left:20px;top:226px;width:986px;height:1px;background:#dcdcdc;"></div>
<div class="r" style="left:0px;top:241px;width:19px;height:1px;background:#c8c8c8;"></div>
<div class="r" style="left:20px;top:241px;width:986px;height:1px;background:#dcdcdc;"></div>
<div class="r" style="left:0px;top:256px;width:19px;height:1px;background:#c8c8c8;"></div>
<div class="r" style="left:20px;top:256px;width:986px;height:1px;background:#dcdcdc;"></div>
<div class="r" style="left:0px;top:271px;width:19px;height:1px;background:#c8c8c8;"></div>
<div class="r" style="left:20px;top:271px;width:986px;height:1px;background:#dcdcdc;"></div>
<div class="r" style="left:0px;top:286px;width:19px;height:1px;background:#c8c8c8;"></div>
<div class="r" style="left:20px;top:286px;width:986px;height:1px;background:#dcdcdc;"></div>
<div class="r" style="left:0px;top:301px;width:19px;height:1px;background:#c8c8c8;"></div>
<div class="r" style="left:20px;top:301px;width:986px;height:1px;background:#dcdcdc;"></div>
<div class="r" style="left:0px;top:316px;width:19px;height:1px;background:#c8c8c8;"></div>
<div class="r" style="left:20px;top:316px;width:986px;height:1px;background:#dcdcdc;"></div>
<div class="r" style="left:0px;top:331px;width:19px;height:1px;background:#c8c8c8;"></div>
<div class="r" style="left:20px;top:331px;width:986px;height:1px;background:#dcdcdc;"></div>
<div class="r" style="left:0px;top:346px;width:19px;height:1px;background:#c8c8c8;"></div>
<div class="r" style="left:20px;top:346px;width:986px;height:1px;background:#dcdcdc;"></div>
<div class="r" style="left:0px;top:361px;width:19px;height:1px;background:#c8c8c8;"></div>
<div class="r" style="left:20px;top:361px;width:986px;height:1px;background:#dcdcdc;"></div>
<div class="r" style="left:0px;top:376px;width:19px;height:1px;background:#c8c8c8;"></div>
<div class="r" style="left:20px;top:376px;width:986px;height:1px;background:#dcdcdc;"></div>
<div class="r" style="left:0px;top:391px;width:19px;height:1px;background:#c8c8c8;"></div>
<div class="r" style="left:20px;top:391px;width:986px;height:1px;background:#dcdcdc;"></div>
<div class="r" style="left:0px;top:406px;width:19px;height:1px;background:#c8c8c8;"></div>
<div class="r" style="left:20px;top:406px;width:986px;height:1px;background:#dcdcdc;"></div>
<div class="r" style="left:0px;top:421px;width:19px;height:1px;background:#c8c8c8;"></div>
<div class="r" style="left:20px;top:421px;width:986px;height:1px;background:#dcdcdc;"></div>
<div class="r" style="left:0px;top:436px;width:19px;height:1px;background:#c8c8c8;"></div>
<div class="r" style="left:20px;top:436px;width:986px;height:1px;background:#dcdcdc;"></div>
<div class="r" style="left:0px;top:451px;width:19px;height:1px;background:#c8c8c8;"></div>
<div class="r" style="left:20px;top:451px;width:986px;height:1px;background:#dcdcdc;"></div>
<div class="r" style="left:0px;top:466px;width:19px;height:1px;background:#c8c8c8;"></div>
<div class="r" style="left:20px;top:466px;width:986px;height:1px;background:#dcdcdc;"></div>
<div class="r" style="left:0px;top:481px;width:19px;height:1px;background:#c8c8c8;"></div>
<div class="r" style="left:20px;top:481px;width:986px;height:1px;background:#dcdcdc;"></div>
<div class="r" style="left:0px;top:496px;width:19px;height:1px;background:#c8c8c8;"></div>
<div class="r" style="left:20px;top:496px;width:986px;height:1px;background:#dcdcdc;"></div>
<div class="r" style="left:0;top:152px;width:1006px;height:357px;overflow:hidden;font-family:'DejaVu Sans','Liberation Sans',sans-serif;-webkit-text-stroke:0.180px #1a1a1a;">
<div class="t" style="top:17.00px;font-size:9px;line-height:12px;color:#333;left:-90.30px;width:200px;text-align:center;-webkit-text-stroke:0.250px;">1</div>
<div class="t" style="top:32.00px;font-size:9px;line-height:12px;color:#217346;left:-90.30px;width:200px;text-align:center;-webkit-text-stroke:0.250px;">2</div>
<div class="t" style="top:47.00px;font-size:9px;line-height:12px;color:#333;left:-90.30px;width:200px;text-align:center;-webkit-text-stroke:0.250px;">3</div>
<div class="t" style="top:62.00px;font-size:9px;line-height:12px;color:#333;left:-90.30px;width:200px;text-align:center;-webkit-text-stroke:0.250px;">4</div>
<div class="t" style="top:77.00px;font-size:9px;line-height:12px;color:#333;left:-90.30px;width:200px;text-align:center;-webkit-text-stroke:0.250px;">5</div>
<div class="t" style="top:92.00px;font-size:9px;line-height:12px;color:#333;left:-90.30px;width:200px;text-align:center;-webkit-text-stroke:0.250px;">6</div>
<div class="t" style="top:107.00px;font-size:9px;line-height:12px;color:#333;left:-90.30px;width:200px;text-align:center;-webkit-text-stroke:0.250px;">7</div>
<div class="t" style="top:122.00px;font-size:9px;line-height:12px;color:#333;left:-90.30px;width:200px;text-align:center;-webkit-text-stroke:0.250px;">8</div>
<div class="t" style="top:137.00px;font-size:9px;line-height:12px;color:#333;left:-90.30px;width:200px;text-align:center;-webkit-text-stroke:0.250px;">9</div>
<div class="t" style="top:152.00px;font-size:9px;line-height:12px;color:#333;left:-90.30px;width:200px;text-align:center;-webkit-text-stroke:0.250px;">10</div>
<div class="t" style="top:167.00px;font-size:9px;line-height:12px;color:#333;left:-90.30px;width:200px;text-align:center;-webkit-text-stroke:0.250px;">11</div>
<div class="t" style="top:182.00px;font-size:9px;line-height:12px;color:#333;left:-90.30px;width:200px;text-align:center;-webkit-text-stroke:0.250px;">12</div>
<div class="t" style="top:197.00px;font-size:9px;line-height:12px;color:#333;left:-90.30px;width:200px;text-align:center;-webkit-text-stroke:0.250px;">13</div>
<div class="t" style="top:212.00px;font-size:9px;line-height:12px;color:#333;left:-90.30px;width:200px;text-align:center;-webkit-text-stroke:0.250px;">14</div>
<div class="t" style="top:227.00px;font-size:9px;line-height:12px;color:#333;left:-90.30px;width:200px;text-align:center;-webkit-text-stroke:0.250px;">15</div>
<div class="t" style="top:242.00px;font-size:9px;line-height:12px;color:#333;left:-90.30px;width:200px;text-align:center;-webkit-text-stroke:0.250px;">16</div>
<div class="t" style="top:257.00px;font-size:9px;line-height:12px;color:#333;left:-90.30px;width:200px;text-align:center;-webkit-text-stroke:0.250px;">17</div>
<div class="t" style="top:272.00px;font-size:9px;line-height:12px;color:#333;left:-90.30px;width:200px;text-align:center;-webkit-text-stroke:0.250px;">18</div>
<div class="t" style="top:287.00px;font-size:9px;line-height:12px;color:#333;left:-90.30px;width:200px;text-align:center;-webkit-text-stroke:0.250px;">19</div>
<div class="t" style="top:302.00px;font-size:9px;line-height:12px;color:#333;left:-90.30px;width:200px;text-align:center;-webkit-text-stroke:0.250px;">20</div>
<div class="t" style="top:317.00px;font-size:9px;line-height:12px;color:#333;left:-90.30px;width:200px;text-align:center;-webkit-text-stroke:0.250px;">21</div>
<div class="t" style="top:332.00px;font-size:9px;line-height:12px;color:#333;left:-90.30px;width:200px;text-align:center;-webkit-text-stroke:0.250px;">22</div>
<div class="t" style="top:347.00px;font-size:9px;line-height:12px;color:#333;left:-90.30px;width:200px;text-align:center;-webkit-text-stroke:0.250px;">23</div>
<div class="t" style="top:17.00px;font-size:9px;line-height:12px;color:#1a1a1a;left:21.20px;">Product Category</div>
<div class="t" style="top:17.00px;font-size:9px;line-height:12px;color:#1a1a1a;left:106.40px;">Sub Category</div>
<div class="t" style="top:17.00px;font-size:9px;line-height:12px;color:#1a1a1a;left:194.40px;">Product</div>
<div class="t" style="top:17.00px;font-size:9px;line-height:12px;color:#1a1a1a;left:342.70px;">Order Quantity</div>
<div class="t" style="top:17.00px;font-size:9px;line-height:12px;color:#1a1a1a;left:418.60px;">Unit Cost</div>
<div class="t" style="top:17.00px;font-size:9px;line-height:12px;color:#1a1a1a;left:465.50px;">Unit Price</div>
<div class="t" style="top:17.00px;font-size:9px;line-height:12px;color:#1a1a1a;left:515.70px;">Cost</div>
<div class="t" style="top:17.00px;font-size:9px;line-height:12px;color:#1a1a1a;left:547.00px;">Revenue</div>
<div class="t" style="top:32.00px;font-size:9px;line-height:12px;color:#1a1a1a;left:21.20px;">Accessories</div>
<div class="t" style="top:32.00px;font-size:9px;line-height:12px;color:#1a1a1a;left:106.40px;">Bike Racks</div>
<div class="t" style="top:32.00px;font-size:9px;line-height:12px;color:#1a1a1a;left:194.40px;">Hitch Rack - 4-Bike</div>
<div class="t" style="top:32.00px;font-size:9px;line-height:12px;color:#1a1a1a;left:213.40px;width:200px;text-align:right;">8</div>
<div class="t" style="top:32.00px;font-size:9px;line-height:12px;color:#1a1a1a;left:261.20px;width:200px;text-align:right;">45</div>
<div class="t" style="top:32.00px;font-size:9px;line-height:12px;color:#1a1a1a;left:311.30px;width:200px;text-align:right;">120</div>
<div class="t" style="top:32.00px;font-size:9px;line-height:12px;color:#1a1a1a;left:342.20px;width:200px;text-align:right;">360</div>
<div class="t" style="top:32.00px;font-size:9px;line-height:12px;color:#1a1a1a;left:389.30px;width:200px;text-align:right;">950</div>
<div class="t" style="top:47.00px;font-size:9px;line-height:12px;color:#1a1a1a;left:21.20px;">Accessories</div>
<div class="t" style="top:47.00px;font-size:9px;line-height:12px;color:#1a1a1a;left:106.40px;">Bike Racks</div>
<div class="t" style="top:47.00px;font-size:9px;line-height:12px;color:#1a1a1a;left:194.40px;">Hitch Rack - 4-Bike</div>
<div class="t" style="top:47.00px;font-size:9px;line-height:12px;color:#1a1a1a;left:213.40px;width:200px;text-align:right;">8</div>
<div class="t" style="top:47.00px;font-size:9px;line-height:12px;color:#1a1a1a;left:261.20px;width:200px;text-align:right;">45</div>
<div class="t" style="top:47.00px;font-size:9px;line-height:12px;color:#1a1a1a;left:311.30px;width:200px;text-align:right;">120</div>
<div class="t" style="top:47.00px;font-size:9px;line-height:12px;color:#1a1a1a;left:342.20px;width:200px;text-align:right;">360</div>
<div class="t" style="top:47.00px;font-size:9px;line-height:12px;color:#1a1a1a;left:389.30px;width:200px;text-align:right;">950</div>
<div class="t" style="top:62.00px;font-size:9px;line-height:12px;color:#1a1a1a;left:21.20px;">Accessories</div>
<div class="t" style="top:62.00px;font-size:9px;line-height:12px;color:#1a1a1a;left:106.40px;">Bike Racks</div>
<div class="t" style="top:62.00px;font-size:9px;line-height:12px;color:#1a1a1a;left:194.40px;">Hitch Rack - 4-Bike</div>
<div class="t" style="top:62.00px;font-size:9px;line-height:12px;color:#1a1a1a;left:213.40px;width:200px;text-align:right;">23</div>
<div class="t" style="top:62.00px;font-size:9px;line-height:12px;color:#1a1a1a;left:261.20px;width:200px;text-align:right;">45</div>
<div class="t" style="top:62.00px;font-size:9px;line-height:12px;color:#1a1a1a;left:311.30px;width:200px;text-align:right;">120</div>
<div class="t" style="top:62.00px;font-size:9px;line-height:12px;color:#1a1a1a;left:342.20px;width:200px;text-align:right;">1035</div>
<div class="t" style="top:62.00px;font-size:9px;line-height:12px;color:#1a1a1a;left:389.30px;width:200px;text-align:right;">2401</div>
<div class="t" style="top:77.00px;font-size:9px;line-height:12px;color:#1a1a1a;left:21.20px;">Accessories</div>
<div class="t" style="top:77.00px;font-size:9px;line-height:12px;color:#1a1a1a;left:106.40px;">Bike Racks</div>
<div class="t" style="top:77.00px;font-size:9px;line-height:12px;color:#1a1a1a;left:194.40px;">Hitch Rack - 4-Bike</div>
<div class="t" style="top:77.00px;font-size:9px;line-height:12px;color:#1a1a1a;left:213.40px;width:200px;text-align:right;">20</div>
<div class="t" style="top:77.00px;font-size:9px;line-height:12px;color:#1a1a1a;left:261.20px;width:200px;text-align:right;">45</div>
<div class="t" style="top:77.00px;font-size:9px;line-height:12px;color:#1a1a1a;left:311.30px;width:200px;text-align:right;">120</div>
<div class="t" style="top:77.00px;font-size:9px;line-height:12px;color:#1a1a1a;left:342.20px;width:200px;text-align:right;">900</div>
<div class="t" style="top:77.00px;font-size:9px;line-height:12px;color:#1a1a1a;left:389.30px;width:200px;text-align:right;">2088</div>
<div class="t" style="top:92.00px;font-size:9px;line-height:12px;color:#1a1a1a;left:21.20px;">Accessories</div>
<div class="t" style="top:92.00px;font-size:9px;line-height:12px;color:#1a1a1a;left:106.40px;">Bike Racks</div>
<div class="t" style="top:92.00px;font-size:9px;line-height:12px;color:#1a1a1a;left:194.40px;">Hitch Rack - 4-Bike</div>
<div class="t" style="top:92.00px;font-size:9px;line-height:12px;color:#1a1a1a;left:213.40px;width:200px;text-align:right;">4</div>
<div class="t" style="top:92.00px;font-size:9px;line-height:12px;color:#1a1a1a;left:261.20px;width:200px;text-align:right;">45</div>
<div class="t" style="top:92.00px;font-size:9px;line-height:12px;color:#1a1a1a;left:311.30px;width:200px;text-align:right;">120</div>
<div class="t" style="top:92.00px;font-size:9px;line-height:12px;color:#1a1a1a;left:342.20px;width:200px;text-align:right;">180</div>
<div class="t" style="top:92.00px;font-size:9px;line-height:12px;color:#1a1a1a;left:389.30px;width:200px;text-align:right;">418</div>
<div class="t" style="top:107.00px;font-size:9px;line-height:12px;color:#1a1a1a;left:21.20px;">Accessories</div>
<div class="t" style="top:107.00px;font-size:9px;line-height:12px;color:#1a1a1a;left:106.40px;">Bike Racks</div>
<div class="t" style="top:107.00px;font-size:9px;line-height:12px;color:#1a1a1a;left:194.40px;">Hitch Rack - 4-Bike</div>
<div class="t" style="top:107.00px;font-size:9px;line-height:12px;color:#1a1a1a;left:213.40px;width:200px;text-align:right;">5</div>
<div class="t" style="top:107.00px;font-size:9px;line-height:12px;color:#1a1a1a;left:261.20px;width:200px;text-align:right;">45</div>
<div class="t" style="top:107.00px;font-size:9px;line-height:12px;color:#1a1a1a;left:311.30px;width:200px;text-align:right;">120</div>
<div class="t" style="top:107.00px;font-size:9px;line-height:12px;color:#1a1a1a;left:342.20px;width:200px;text-align:right;">225</div>
<div class="t" style="top:107.00px;font-size:9px;line-height:12px;color:#1a1a1a;left:389.30px;width:200px;text-align:right;">522</div>
<div class="t" style="top:122.00px;font-size:9px;line-height:12px;color:#1a1a1a;left:21.20px;">Accessories</div>
<div class="t" style="top:122.00px;font-size:9px;line-height:12px;color:#1a1a1a;left:106.40px;">Bike Racks</div>
<div class="t" style="top:122.00px;font-size:9px;line-height:12px;color:#1a1a1a;left:194.40px;">Hitch Rack - 4-Bike</div>
<div class="t" style="top:122.00px;font-size:9px;line-height:12px;color:#1a1a1a;left:213.40px;width:200px;text-align:right;">4</div>
<div class="t" style="top:122.00px;font-size:9px;line-height:12px;color:#1a1a1a;left:261.20px;width:200px;text-align:right;">45</div>
<div class="t" style="top:122.00px;font-size:9px;line-height:12px;color:#1a1a1a;left:311.30px;width:200px;text-align:right;">120</div>
<div class="t" style="top:122.00px;font-size:9px;line-height:12px;color:#1a1a1a;left:342.20px;width:200px;text-align:right;">180</div>
<div class="t" style="top:122.00px;font-size:9px;line-height:12px;color:#1a1a1a;left:389.30px;width:200px;text-align:right;">379</div>
<div class="t" style="top:137.00px;font-size:9px;line-height:12px;color:#1a1a1a;left:21.20px;">Accessories</div>
<div class="t" style="top:137.00px;font-size:9px;line-height:12px;color:#1a1a1a;left:106.40px;">Bike Racks</div>
<div class="t" style="top:137.00px;font-size:9px;line-height:12px;color:#1a1a1a;left:194.40px;">Hitch Rack - 4-Bike</div>
<div class="t" style="top:137.00px;font-size:9px;line-height:12px;color:#1a1a1a;left:213.40px;width:200px;text-align:right;">2</div>
<div class="t" style="top:137.00px;font-size:9px;line-height:12px;color:#1a1a1a;left:261.20px;width:200px;text-align:right;">45</div>
<div class="t" style="top:137.00px;font-size:9px;line-height:12px;color:#1a1a1a;left:311.30px;width:200px;text-align:right;">120</div>
<div class="t" style="top:137.00px;font-size:9px;line-height:12px;color:#1a1a1a;left:342.20px;width:200px;text-align:right;">90</div>
<div class="t" style="top:137.00px;font-size:9px;line-height:12px;color:#1a1a1a;left:389.30px;width:200px;text-align:right;">190</div>
<div class="t" style="top:152.00px;font-size:9px;line-height:12px;color:#1a1a1a;left:21.20px;">Accessories</div>
<div class="t" style="top:152.00px;font-size:9px;line-height:12px;color:#1a1a1a;left:106.40px;">Bike Racks</div>
<div class="t" style="top:152.00px;font-size:9px;line-height:12px;color:#1a1a1a;left:194.40px;">Hitch Rack - 4-Bike</div>
<div class="t" style="top:152.00px;font-size:9px;line-height:12px;color:#1a1a1a;left:213.40px;width:200px;text-align:right;">22</div>
<div class="t" style="top:152.00px;font-size:9px;line-height:12px;color:#1a1a1a;left:261.20px;width:200px;text-align:right;">45</div>
<div class="t" style="top:152.00px;font-size:9px;line-height:12px;color:#1a1a1a;left:311.30px;width:200px;text-align:right;">120</div>
<div class="t" style="top:152.00px;font-size:9px;line-height:12px;color:#1a1a1a;left:342.20px;width:200px;text-align:right;">990</div>
<div class="t" style="top:152.00px;font-size:9px;line-height:12px;color:#1a1a1a;left:389.30px;width:200px;text-align:right;">2086</div>
<div class="t" style="top:167.00px;font-size:9px;line-height:12px;color:#1a1a1a;left:21.20px;">Accessories</div>
<div class="t" style="top:167.00px;font-size:9px;line-height:12px;color:#1a1a1a;left:106.40px;">Bike Racks</div>
<div class="t" style="top:167.00px;font-size:9px;line-height:12px;color:#1a1a1a;left:194.40px;">Hitch Rack - 4-Bike</div>
<div class="t" style="top:167.00px;font-size:9px;line-height:12px;color:#1a1a1a;left:213.40px;width:200px;text-align:right;">21</div>
<div class="t" style="top:167.00px;font-size:9px;line-height:12px;color:#1a1a1a;left:261.20px;width:200px;text-align:right;">45</div>
<div class="t" style="top:167.00px;font-size:9px;line-height:12px;color:#1a1a1a;left:311.30px;width:200px;text-align:right;">120</div>
<div class="t" style="top:167.00px;font-size:9px;line-height:12px;color:#1a1a1a;left:342.20px;width:200px;text-align:right;">945</div>
<div class="t" style="top:167.00px;font-size:9px;line-height:12px;color:#1a1a1a;left:389.30px;width:200px;text-align:right;">1991</div>
<div class="t" style="top:182.00px;font-size:9px;line-height:12px;color:#1a1a1a;left:21.20px;">Accessories</div>
<div class="t" style="top:182.00px;font-size:9px;line-height:12px;color:#1a1a1a;left:106.40px;">Bike Racks</div>
<div class="t" style="top:182.00px;font-size:9px;line-height:12px;color:#1a1a1a;left:194.40px;">Hitch Rack - 4-Bike</div>
<div class="t" style="top:182.00px;font-size:9px;line-height:12px;color:#1a1a1a;left:213.40px;width:200px;text-align:right;">8</div>
<div class="t" style="top:182.00px;font-size:9px;line-height:12px;color:#1a1a1a;left:261.20px;width:200px;text-align:right;">45</div>
<div class="t" style="top:182.00px;font-size:9px;line-height:12px;color:#1a1a1a;left:311.30px;width:200px;text-align:right;">120</div>
<div class="t" style="top:182.00px;font-size:9px;line-height:12px;color:#1a1a1a;left:342.20px;width:200px;text-align:right;">360</div>
<div class="t" style="top:182.00px;font-size:9px;line-height:12px;color:#1a1a1a;left:389.30px;width:200px;text-align:right;">758</div>
<div class="t" style="top:197.00px;font-size:9px;line-height:12px;color:#1a1a1a;left:21.20px;">Accessories</div>
<div class="t" style="top:197.00px;font-size:9px;line-height:12px;color:#1a1a1a;left:106.40px;">Bike Racks</div>
<div class="t" style="top:197.00px;font-size:9px;line-height:12px;color:#1a1a1a;left:194.40px;">Hitch Rack - 4-Bike</div>
<div class="t" style="top:197.00px;font-size:9px;line-height:12px;color:#1a1a1a;left:213.40px;width:200px;text-align:right;">8</div>
<div class="t" style="top:197.00px;font-size:9px;line-height:12px;color:#1a1a1a;left:261.20px;width:200px;text-align:right;">45</div>
<div class="t" style="top:197.00px;font-size:9px;line-height:12px;color:#1a1a1a;left:311.30px;width:200px;text-align:right;">120</div>
<div class="t" style="top:197.00px;font-size:9px;line-height:12px;color:#1a1a1a;left:342.20px;width:200px;text-align:right;">360</div>
<div class="t" style="top:197.00px;font-size:9px;line-height:12px;color:#1a1a1a;left:389.30px;width:200px;text-align:right;">758</div>
<div class="t" style="top:212.00px;font-size:9px;line-height:12px;color:#1a1a1a;left:21.20px;">Accessories</div>
<div class="t" style="top:212.00px;font-size:9px;line-height:12px;color:#1a1a1a;left:106.40px;">Bike Racks</div>
<div class="t" style="top:212.00px;font-size:9px;line-height:12px;color:#1a1a1a;left:194.40px;">Hitch Rack - 4-Bike</div>
<div class="t" style="top:212.00px;font-size:9px;line-height:12px;color:#1a1a1a;left:213.40px;width:200px;text-align:right;">7</div>
<div class="t" style="top:212.00px;font-size:9px;line-height:12px;color:#1a1a1a;left:261.20px;width:200px;text-align:right;">45</div>
<div class="t" style="top:212.00px;font-size:9px;line-height:12px;color:#1a1a1a;left:311.30px;width:200px;text-align:right;">120</div>
<div class="t" style="top:212.00px;font-size:9px;line-height:12px;color:#1a1a1a;left:342.20px;width:200px;text-align:right;">315</div>
<div class="t" style="top:212.00px;font-size:9px;line-height:12px;color:#1a1a1a;left:389.30px;width:200px;text-align:right;">664</div>
<div class="t" style="top:227.00px;font-size:9px;line-height:12px;color:#1a1a1a;left:21.20px;">Accessories</div>
<div class="t" style="top:227.00px;font-size:9px;line-height:12px;color:#1a1a1a;left:106.40px;">Bike Racks</div>
<div class="t" style="top:227.00px;font-size:9px;line-height:12px;color:#1a1a1a;left:194.40px;">Hitch Rack - 4-Bike</div>
<div class="t" style="top:227.00px;font-size:9px;line-height:12px;color:#1a1a1a;left:213.40px;width:200px;text-align:right;">7</div>
<div class="t" style="top:227.00px;font-size:9px;line-height:12px;color:#1a1a1a;left:261.20px;width:200px;text-align:right;">45</div>
<div class="t" style="top:227.00px;font-size:9px;line-height:12px;color:#1a1a1a;left:311.30px;width:200px;text-align:right;">120</div>
<div class="t" style="top:227.00px;font-size:9px;line-height:12px;color:#1a1a1a;left:342.20px;width:200px;text-align:right;">315</div>
<div class="t" style="top:227.00px;font-size:9px;line-height:12px;color:#1a1a1a;left:389.30px;width:200px;text-align:right;">664</div>
<div class="t" style="top:242.00px;font-size:9px;line-height:12px;color:#1a1a1a;left:21.20px;">Accessories</div>
<div class="t" style="top:242.00px;font-size:9px;line-height:12px;color:#1a1a1a;left:106.40px;">Bike Racks</div>
<div class="t" style="top:242.00px;font-size:9px;line-height:12px;color:#1a1a1a;left:194.40px;">Hitch Rack - 4-Bike</div>
<div class="t" style="top:242.00px;font-size:9px;line-height:12px;color:#1a1a1a;left:213.40px;width:200px;text-align:right;">5</div>
<div class="t" style="top:242.00px;font-size:9px;line-height:12px;color:#1a1a1a;left:261.20px;width:200px;text-align:right;">45</div>
<div class="t" style="top:242.00px;font-size:9px;line-height:12px;color:#1a1a1a;left:311.30px;width:200px;text-align:right;">120</div>
<div class="t" style="top:242.00px;font-size:9px;line-height:12px;color:#1a1a1a;left:342.20px;width:200px;text-align:right;">225</div>
<div class="t" style="top:242.00px;font-size:9px;line-height:12px;color:#1a1a1a;left:389.30px;width:200px;text-align:right;">594</div>
<div class="t" style="top:257.00px;font-size:9px;line-height:12px;color:#1a1a1a;left:21.20px;">Accessories</div>
<div class="t" style="top:257.00px;font-size:9px;line-height:12px;color:#1a1a1a;left:106.40px;">Bike Racks</div>
<div class="t" style="top:257.00px;font-size:9px;line-height:12px;color:#1a1a1a;left:194.40px;">Hitch Rack - 4-Bike</div>
<div class="t" style="top:257.00px;font-size:9px;line-height:12px;color:#1a1a1a;left:213.40px;width:200px;text-align:right;">7</div>
<div class="t" style="top:257.00px;font-size:9px;line-height:12px;color:#1a1a1a;left:261.20px;width:200px;text-align:right;">45</div>
<div class="t" style="top:257.00px;font-size:9px;line-height:12px;color:#1a1a1a;left:311.30px;width:200px;text-align:right;">120</div>
<div class="t" style="top:257.00px;font-size:9px;line-height:12px;color:#1a1a1a;left:342.20px;width:200px;text-align:right;">315</div>
<div class="t" style="top:257.00px;font-size:9px;line-height:12px;color:#1a1a1a;left:389.30px;width:200px;text-align:right;">832</div>
<div class="t" style="top:272.00px;font-size:9px;line-height:12px;color:#1a1a1a;left:21.20px;">Accessories</div>
<div class="t" style="top:272.00px;font-size:9px;line-height:12px;color:#1a1a1a;left:106.40px;">Bike Racks</div>
<div class="t" style="top:272.00px;font-size:9px;line-height:12px;color:#1a1a1a;left:194.40px;">Hitch Rack - 4-Bike</div>
<div class="t" style="top:272.00px;font-size:9px;line-height:12px;color:#1a1a1a;left:213.40px;width:200px;text-align:right;">2</div>
<div class="t" style="top:272.00px;font-size:9px;line-height:12px;color:#1a1a1a;left:261.20px;width:200px;text-align:right;">45</div>
<div class="t" style="top:272.00px;font-size:9px;line-height:12px;color:#1a1a1a;left:311.30px;width:200px;text-align:right;">120</div>
<div class="t" style="top:272.00px;font-size:9px;line-height:12px;color:#1a1a1a;left:342.20px;width:200px;text-align:right;">90</div>
<div class="t" style="top:272.00px;font-size:9px;line-height:12px;color:#1a1a1a;left:389.30px;width:200px;text-align:right;">238</div>
<div class="t" style="top:287.00px;font-size:9px;line-height:12px;color:#1a1a1a;left:21.20px;">Accessories</div>
<div class="t" style="top:287.00px;font-size:9px;line-height:12px;color:#1a1a1a;left:106.40px;">Bike Racks</div>
<div class="t" style="top:287.00px;font-size:9px;line-height:12px;color:#1a1a1a;left:194.40px;">Hitch Rack - 4-Bike</div>
<div class="t" style="top:287.00px;font-size:9px;line-height:12px;color:#1a1a1a;left:213.40px;width:200px;text-align:right;">1</div>
<div class="t" style="top:287.00px;font-size:9px;line-height:12px;color:#1a1a1a;left:261.20px;width:200px;text-align:right;">45</div>
<div class="t" style="top:287.00px;font-size:9px;line-height:12px;color:#1a1a1a;left:311.30px;width:200px;text-align:right;">120</div>
<div class="t" style="top:287.00px;font-size:9px;line-height:12px;color:#1a1a1a;left:342.20px;width:200px;text-align:right;">45</div>
<div class="t" style="top:287.00px;font-size:9px;line-height:12px;color:#1a1a1a;left:389.30px;width:200px;text-align:right;">119</div>
<div class="t" style="top:302.00px;font-size:9px;line-height:12px;color:#1a1a1a;left:21.20px;">Accessories</div>
<div class="t" style="top:302.00px;font-size:9px;line-height:12px;color:#1a1a1a;left:106.40px;">Bike Racks</div>
<div class="t" style="top:302.00px;font-size:9px;line-height:12px;color:#1a1a1a;left:194.40px;">Hitch Rack - 4-Bike</div>
<div class="t" style="top:302.00px;font-size:9px;line-height:12px;color:#1a1a1a;left:213.40px;width:200px;text-align:right;">1</div>
<div class="t" style="top:302.00px;font-size:9px;line-height:12px;color:#1a1a1a;left:261.20px;width:200px;text-align:right;">45</div>
<div class="t" style="top:302.00px;font-size:9px;line-height:12px;color:#1a1a1a;left:311.30px;width:200px;text-align:right;">120</div>
<div class="t" style="top:302.00px;font-size:9px;line-height:12px;color:#1a1a1a;left:342.20px;width:200px;text-align:right;">45</div>
<div class="t" style="top:302.00px;font-size:9px;line-height:12px;color:#1a1a1a;left:389.30px;width:200px;text-align:right;">119</div>
<div class="t" style="top:317.00px;font-size:9px;line-height:12px;color:#1a1a1a;left:21.20px;">Accessories</div>
<div class="t" style="top:317.00px;font-size:9px;line-height:12px;color:#1a1a1a;left:106.40px;">Bike Racks</div>
<div class="t" style="top:317.00px;font-size:9px;line-height:12px;color:#1a1a1a;left:194.40px;">Hitch Rack - 4-Bike</div>
<div class="t" style="top:317.00px;font-size:9px;line-height:12px;color:#1a1a1a;left:213.40px;width:200px;text-align:right;">1</div>
<div class="t" style="top:317.00px;font-size:9px;line-height:12px;color:#1a1a1a;left:261.20px;width:200px;text-align:right;">45</div>
<div class="t" style="top:317.00px;font-size:9px;line-height:12px;color:#1a1a1a;left:311.30px;width:200px;text-align:right;">120</div>
<div class="t" style="top:317.00px;font-size:9px;line-height:12px;color:#1a1a1a;left:342.20px;width:200px;text-align:right;">45</div>
<div class="t" style="top:317.00px;font-size:9px;line-height:12px;color:#1a1a1a;left:389.30px;width:200px;text-align:right;">119</div>
<div class="t" style="top:332.00px;font-size:9px;line-height:12px;color:#1a1a1a;left:21.20px;">Accessories</div>
<div class="t" style="top:332.00px;font-size:9px;line-height:12px;color:#1a1a1a;left:106.40px;">Bike Racks</div>
<div class="t" style="top:332.00px;font-size:9px;line-height:12px;color:#1a1a1a;left:194.40px;">Hitch Rack - 4-Bike</div>
<div class="t" style="top:332.00px;font-size:9px;line-height:12px;color:#1a1a1a;left:213.40px;width:200px;text-align:right;">6</div>
<div class="t" style="top:332.00px;font-size:9px;line-height:12px;color:#1a1a1a;left:261.20px;width:200px;text-align:right;">45</div>
<div class="t" style="top:332.00px;font-size:9px;line-height:12px;color:#1a1a1a;left:311.30px;width:200px;text-align:right;">120</div>
<div class="t" style="top:332.00px;font-size:9px;line-height:12px;color:#1a1a1a;left:342.20px;width:200px;text-align:right;">270</div>
<div class="t" style="top:332.00px;font-size:9px;line-height:12px;color:#1a1a1a;left:389.30px;width:200px;text-align:right;">713</div>
<div class="t" style="top:347.00px;font-size:9px;line-height:12px;color:#1a1a1a;left:21.20px;">Accessories</div>
<div class="t" style="top:347.00px;font-size:9px;line-height:12px;color:#1a1a1a;left:106.40px;">Bike Racks</div>
<div class="t" style="top:347.00px;font-size:9px;line-height:12px;color:#1a1a1a;left:194.40px;">Hitch Rack - 4-Bike</div>
<div class="t" style="top:347.00px;font-size:9px;line-height:12px;color:#1a1a1a;left:213.40px;width:200px;text-align:right;">8</div>
<div class="t" style="top:347.00px;font-size:9px;line-height:12px;color:#1a1a1a;left:261.20px;width:200px;text-align:right;">45</div>
<div class="t" style="top:347.00px;font-size:9px;line-height:12px;color:#1a1a1a;left:311.30px;width:200px;text-align:right;">120</div>
<div class="t" style="top:347.00px;font-size:9px;line-height:12px;color:#1a1a1a;left:342.20px;width:200px;text-align:right;">360</div>
<div class="t" style="top:347.00px;font-size:9px;line-height:12px;color:#1a1a1a;left:389.30px;width:200px;text-align:right;">950</div>
</div>
<div class="r" style="left:543.800px;top:180.500px;width:48.700px;height:16.500px;border:1.700px solid #217346;box-sizing:border-box;"></div>
<div class="r" style="left:588.5px;top:193.5px;width:3.5px;height:3.5px;background:#217346;border:1px solid #fff;border-right:none;border-bottom:none;box-sizing:content-box;"></div>
<div class="r" style="left:185px;top:145px;width:51px;height:13px;background:#fff;border:1px solid #cfcfcf;box-sizing:border-box;box-shadow:1px 1px 2px rgba(0,0,0,0.150);"></div>
<div class="t" style="top:146.00px;font-size:8.7px;line-height:12px;color:#666;left:187.00px;-webkit-text-stroke:0;">Formula Bar</div>
<div class="r" style="left:1007px;top:152px;width:16px;height:356px;background:#e6e6e6;"></div>
<div class="r" style="left:1009.5px;top:153px;width:11.5px;height:354px;background:#d9d9d9;"></div>
<div class="r" style="left:1009.5px;top:153px;width:11.5px;height:11.5px;background:#fff;border:1px solid #c6c6c6;box-sizing:border-box;"></div>
<svg class="r" style="left:1012.2px;top:157px;" width="6" height="3.5" viewBox="0 0 6 3.5"><path d="M0 3.500l3-3.500 3 3.500z" fill="#666"/></svg>
<div class="r" style="left:1009.5px;top:164px;width:11.5px;height:13px;background:#fff;border:1px solid #c6c6c6;box-sizing:border-box;"></div>
<div class="r" style="left:1009.5px;top:497.5px;width:11.5px;height:10.5px;background:#fff;border:1px solid #c6c6c6;box-sizing:border-box;"></div>
<svg class="r" style="left:1012.2px;top:501px;" width="6" height="3.5" viewBox="0 0 6 3.5"><path d="M0 0h6l-3 3.500z" fill="#666"/></svg>
<div class="r" style="left:0px;top:508.6px;width:1023px;height:20.4px;background:#e6e6e6;"></div>
<div class="r" style="left:0px;top:507.6px;width:1007px;height:1px;background:#bdbdbd;"></div>
<svg class="r" style="left:20px;top:514px;" width="4" height="7" viewBox="0 0 4 7"><path d="M3.500 0l-3.500 3.500 3.500 3.500z" fill="#c8c8c8"/></svg>
<svg class="r" style="left:42px;top:514px;" width="4" height="7" viewBox="0 0 4 7"><path d="M0 0l3.500 3.500-3.500 3.500z" fill="#c8c8c8"/></svg>
<div class="r" style="left:75px;top:508px;width:40px;height:16.5px;background:#fff;"></div>
<div class="r" style="left:75px;top:524.5px;width:40px;height:1.5px;background:#217346;"></div>
<div class="t" style="top:512.00px;font-size:9.5px;line-height:12px;color:#217346;left:-5.00px;width:200px;text-align:center;font-weight:bold;">Data</div>
<svg class="r" style="left:139px;top:512px;" width="12" height="12" viewBox="0 0 12 12"><circle cx="6" cy="6" r="5.300" fill="none" stroke="#858585" stroke-width="1"/><path d="M6 3.200v5.600M3.200 6h5.600" stroke="#777" stroke-width="1.200"/></svg>
<div class="r" style="left:614px;top:515px;width:1px;height:1px;background:#999;"></div>
<div class="r" style="left:614px;top:518px;width:1px;height:1px;background:#999;"></div>
<div class="r" style="left:614px;top:521px;width:1px;height:1px;background:#999;"></div>
<div class="r" style="left:637px;top:513.5px;width:110px;height:10.5px;background:#dadada;"></div>
<div class="r" style="left:0px;top:528px;width:1023px;height:1px;background:#dcdcdc;"></div>
<div class="r" style="left:626px;top:513.5px;width:11px;height:10.5px;background:#fff;border:1px solid #c6c6c6;box-sizing:border-box;"></div>
<svg class="r" style="left:629px;top:516px;" width="4" height="5" viewBox="0 0 4 5"><path d="M4 0l-4 2.500 4 2.500z" fill="#555"/></svg>
<div class="r" style="left:747px;top:513.5px;width:249px;height:10.5px;background:#fff;border:1px solid #c6c6c6;box-sizing:border-box;"></div>
<div class="r" style="left:998px;top:513.5px;width:11px;height:10.5px;background:#fff;border:1px solid #c6c6c6;box-sizing:border-box;"></div>
<svg class="r" style="left:1002px;top:516px;" width="4" height="5" viewBox="0 0 4 5"><path d="M0 0l4 2.500-4 2.500z" fill="#555"/></svg>
<div class="r" style="left:0px;top:529px;width:1023px;height:16px;background:#f3f3f3;"></div>
<div class="r" style="left:809px;top:529px;width:28px;height:16px;background:#d0d0d0;"></div>
<svg class="r" style="left:817.5px;top:531px;" width="12" height="11" viewBox="0 0 12 11"><path d="M0.500 0.500h9.500v9h-9.500z M0.500 3.500h9.500 M0.500 6.500h9.500 M3.700 0.500v9 M6.900 0.500v9" fill="none" stroke="#7a7a7a" stroke-width="1"/></svg>
<svg class="r" style="left:846px;top:531px;" width="12" height="11" viewBox="0 0 12 11"><path d="M0.500 0.500h10v9h-10z" fill="none" stroke="#858585" stroke-width="1"/><path d="M2.500 2.500h6v5h-6z" fill="none" stroke="#858585" stroke-width="1"/></svg>
<svg class="r" style="left:874px;top:531px;" width="12" height="11" viewBox="0 0 12 11"><path d="M0.500 0.500h10v9h-10z" fill="none" stroke="#858585" stroke-width="1"/><path d="M3.500 0.500v5h4v-5" fill="none" stroke="#858585" stroke-width="1"/></svg>
<div class="r" style="left:898px;top:536px;width:4px;height:1px;background:#555;"></div>
<div class="r" style="left:906px;top:536px;width:75px;height:1px;background:#b0b0b0;"></div>
<div class="r" style="left:942px;top:532px;width:3px;height:9px;background:#555;"></div>
<div class="r" style="left:983px;top:536px;width:5px;height:1px;background:#555;"></div>
<div class="r" style="left:985px;top:534px;width:1px;height:5px;background:#555;"></div>
<div class="t" style="top:531.00px;font-size:8.5px;line-height:12px;color:#444;left:818.00px;width:200px;text-align:right;">100%</div>
<div class="r" style="left:0px;top:545px;width:1023px;height:30px;background:#0b171b;"></div>
<div class="r" style="left:0px;top:545px;width:1023px;height:1px;background:#1c2b30;"></div>
<svg class="r" style="left:12px;top:554px;" width="12" height="12" viewBox="0 0 12 12"><path d="M0 1.700l5-0.700v4.700h-5z M5.700 0.900l6.300-0.900v5.700h-6.300z M0 6.400h5v4.700l-5-0.700z M5.700 6.400h6.300v5.600l-6.300-0.900z" fill="#fff"/></svg>
<svg class="r" style="left:47px;top:553px;" width="14" height="14" viewBox="0 0 14 14"><circle cx="8.500" cy="5" r="3.900" fill="none" stroke="#fff" stroke-width="1"/><path d="M5.700 7.800l-4.700 4.700" stroke="#fff" stroke-width="1.200"/></svg>
<svg class="r" style="left:83px;top:554px;" width="14" height="12" viewBox="0 0 14 12"><path d="M1.500 0.500v11M9.500 0.500v11M1.500 3.500h8M1.500 8.500h8" fill="none" stroke="#fff" stroke-width="1.300"/><path d="M12.200 3.500v8" stroke="#fff" stroke-width="1.200"/><circle cx="12.200" cy="1.300" r="0.900" fill="#fff"/></svg>
<svg class="r" style="left:119px;top:551px;" width="19" height="17" viewBox="0 0 19 17"><path d="M0.500 6.500l9-6 9 6v10h-18z" fill="#1f8ad6"/><path d="M2 6l7.500 5 7.500-5v-0.500h-15z" fill="#fff"/><path d="M0.500 7v9.500h18v-9.500l-9 6z" fill="#35a8ef"/></svg>
<svg class="r" style="left:156px;top:550px;" width="17" height="18" viewBox="0 0 17 18"><path d="M5.500 5.500v-1.500a3 3 0 0 1 6 0v1.500" fill="none" stroke="#e8e8e8" stroke-width="1.200"/><path d="M0.300 5.500h16.400l-0.500 12h-15.400z" fill="#fff"/><rect x="4.300" y="8" width="3.800" height="3.800" fill="#f25022"/><rect x="8.900" y="8" width="3.800" height="3.800" fill="#7fba00"/><rect x="4.300" y="12.500" width="3.800" height="3.800" fill="#00a4ef"/><rect x="8.900" y="12.500" width="3.800" height="3.800" fill="#ffb900"/></svg>
<svg class="r" style="left:192px;top:553px;" width="19" height="14" viewBox="0 0 19 14"><path d="M0.500 2.500h4l1.500-2h6l1.500 2h5v11h-18z" fill="#fff"/><circle cx="9" cy="8" r="3.600" fill="#0b171b"/><circle cx="9" cy="8" r="1.800" fill="#fff"/><rect x="15" y="4" width="2" height="1.500" fill="#0b171b"/></svg>
<svg class="r" style="left:231px;top:551px;" width="14" height="17" viewBox="0 0 14 17"><rect x="0" y="0" width="14" height="17" rx="1" fill="#fff"/><rect x="2" y="2" width="10" height="3" fill="#0b171b"/><rect x="2.0" y="7" width="2.200" height="1.800" fill="#0b171b"/><rect x="5.7" y="7" width="2.200" height="1.800" fill="#0b171b"/><rect x="9.4" y="7" width="2.200" height="1.800" fill="#0b171b"/><rect x="2.0" y="10" width="2.200" height="1.800" fill="#0b171b"/><rect x="5.7" y="10" width="2.200" height="1.800" fill="#0b171b"/><rect x="9.4" y="10" width="2.200" height="1.800" fill="#0b171b"/><rect x="2.0" y="13" width="2.200" height="1.800" fill="#0b171b"/><rect x="5.7" y="13" width="2.200" height="1.800" fill="#0b171b"/><rect x="9.4" y="13" width="2.200" height="1.800" fill="#0b171b"/></svg>
<svg class="r" style="left:266px;top:551px;" width="18" height="18" viewBox="0 0 18 18"><defs><radialGradient id="ff" cx="0.600" cy="0.250" r="0.800"><stop offset="0" stop-color="#ffe04a"/><stop offset="0.450" stop-color="#ff8a16"/><stop offset="1" stop-color="#e31587"/></radialGradient></defs><circle cx="9" cy="9.500" r="8.300" fill="url(#ff)"/><path d="M3 3c1-2 3-2.500 4-2-1 1-1 2.500 0 3.500z" fill="#ff8a16"/><circle cx="8.500" cy="10" r="4.300" fill="#7542e5"/><path d="M4.500 8c2-2.500 6-2.500 8 0-2-1-3.500 0-4.500 1.500z" fill="#ffbd4f"/></svg>
<svg class="r" style="left:303px;top:551px;" width="17" height="18" viewBox="0 0 17 18"><ellipse cx="8.500" cy="9" rx="8.200" ry="8.700" fill="#e0161b"/><ellipse cx="8.500" cy="9" rx="3.600" ry="6.300" fill="#0b171b"/></svg>
<svg class="r" style="left:340px;top:552px;" width="17" height="15" viewBox="0 0 17 15"><path d="M0.500 1h6l1.500 2h8.500v11h-16z" fill="#f5c84c"/><path d="M0.500 4.500h16v9.500h-16z" fill="#fbe08a"/><path d="M4.500 9h8v5h-2v-2.500h-4v2.500h-2z" fill="#3a96dd"/></svg>
<div class="r" style="left:333px;top:573px;width:30px;height:2px;background:#8ecbf0;"></div>
<svg class="r" style="left:377px;top:552px;" width="17" height="16" viewBox="0 0 17 16"><rect x="0.500" y="0.500" width="16" height="15" fill="#1c2a6b" stroke="#8fa5ff" stroke-width="1"/></svg>
<div class="t" style="top:554.00px;font-size:9px;line-height:12px;color:#9fb4ff;left:285.50px;width:200px;text-align:center;font-weight:bold;">Ps</div>
<svg class="r" style="left:413px;top:551px;" width="19" height="19" viewBox="0 0 19 19"><circle cx="8.500" cy="8.500" r="8.300" fill="#db4437"/><path d="M8.500 8.500l-7.200 4.200a8.300 8.300 0 0 0 9.500 3.800z" fill="#0f9d58"/><path d="M8.500 8.500l2.300 8a8.300 8.300 0 0 0 5.300-11.500h-7.600z" fill="#ffcd40"/><circle cx="8.500" cy="8.500" r="3.800" fill="#fff"/><circle cx="8.500" cy="8.500" r="3" fill="#4285f4"/><circle cx="14" cy="14" r="4.300" fill="#6aa84f"/><rect x="13.500" y="12" width="1" height="1" fill="#fff"/><rect x="13.500" y="13.600" width="1" height="2.600" fill="#fff"/></svg>
<div class="r" style="left:406px;top:573px;width:30px;height:2px;background:#8ecbf0;"></div>
<svg class="r" style="left:450px;top:552px;" width="16" height="15" viewBox="0 0 16 15"><rect width="16" height="15" rx="1" fill="#c8101a"/><path d="M3 12c2-1 4.500-5 5-9 0.500 4 2.500 7 5.500 7.500-3.500-0.500-7.500 0.500-10.500 1.500z" fill="none" stroke="#fff" stroke-width="1.100"/></svg>
<svg class="r" style="left:487px;top:552px;" width="17" height="17" viewBox="0 0 17 17"><rect x="0.500" y="0.500" width="7.500" height="7.500" fill="#b5272d"/><rect x="9" y="0.500" width="7.500" height="7.500" fill="#3c9a3c"/><rect x="0.500" y="9" width="7.500" height="7.500" fill="#b9a512"/><rect x="9" y="9" width="7.500" height="7.500" fill="#6a2c91"/></svg>
<svg class="r" style="left:522px;top:551px;" width="19" height="18" viewBox="0 0 19 18"><rect width="19" height="18" rx="4" fill="#2dc53c"/><path d="M9.500 3.500c-3.600 0-6.300 2.200-6.300 5 0 2.500 2.100 4.500 5.100 4.900 0.500 0.100 0.500 0.400 0.400 1.200 1.800-0.900 7-3.200 7-6.100 0-2.800-2.700-5-6.200-5z" fill="#fff"/></svg>
<div class="t" style="top:557.00px;font-size:4.5px;line-height:6px;color:#2dc53c;left:431.50px;width:200px;text-align:center;font-weight:bold;">LINE</div>
<div class="r" style="left:517px;top:573px;width:30px;height:2px;background:#8ecbf0;"></div>
<svg class="r" style="left:561px;top:551px;" width="14" height="18" viewBox="0 0 14 18"><path d="M0.500 4l8-3.500 5 1.500v14l-5 1.500-8-3.500 8 1v-11.500l-5 1.500v7l-3 1.500z" fill="#e2431e"/></svg>
<svg class="r" style="left:596px;top:550px;" width="20" height="20" viewBox="0 0 20 20"><path d="M9.500 1.500a7.700 7.700 0 0 0-6.600 11.700l-1.400 4.300 4.500-1.300a7.700 7.700 0 1 0 3.500-14.700z" fill="#2cb742" stroke="#fff" stroke-width="1.200"/><path d="M6.500 5.500c-1.500 2 1.500 6.500 5 7l1-1.500-1.800-1-0.800 0.700c-1-0.500-1.900-1.500-2.300-2.500l0.700-0.700-0.800-2z" fill="#fff"/><circle cx="14" cy="14" r="5.500" fill="#e81123"/></svg>
<div class="t" style="top:560.00px;font-size:7px;line-height:8px;color:#fff;left:510.00px;width:200px;text-align:center;">38</div>
<div class="r" style="left:590px;top:573px;width:30px;height:2px;background:#8ecbf0;"></div>
<svg class="r" style="left:633px;top:552px;" width="19" height="16" viewBox="0 0 19 16"><rect x="6" y="0.500" width="12.500" height="15" rx="1" fill="#21a366"/><rect x="12" y="0.500" width="6.500" height="5" fill="#33c481"/><rect x="6" y="5.500" width="6.250" height="5" fill="#107c41"/><rect x="12.250" y="10.500" width="6.250" height="5" fill="#185c37"/><rect x="0.500" y="3.500" width="10" height="9.500" rx="1" fill="#107c41"/></svg>
<div class="t" style="top:557.00px;font-size:7px;line-height:8px;color:#fff;left:538.50px;width:200px;text-align:center;font-weight:bold;">X</div>
<div class="r" style="left:627px;top:573px;width:28px;height:2px;background:#8ecbf0;"></div>
<div class="r" style="left:655px;top:573px;width:2px;height:2px;background:#5a7f96;"></div>
<svg class="r" style="left:668px;top:550px;" width="20" height="20" viewBox="0 0 20 20"><path d="M9 4c-4.500 0-8 3-8 7s3 6.500 6 6.500c2 0 1.500-2 3-2.500s5 1 5-4c0-4-2-7-6-7z" fill="#e8ecf4"/><circle cx="5" cy="8.500" r="1.300" fill="#e84a3a"/><circle cx="8.500" cy="6.500" r="1.300" fill="#f2b632"/><circle cx="4.500" cy="12.500" r="1.300" fill="#3a8ee8"/><circle cx="11.500" cy="8" r="1.300" fill="#4db35a"/><path d="M17.500 1l1 0.700-5.500 12-1.500-0.700z" fill="#d98a3a"/><path d="M11.500 13l1.500 0.700-1.500 3.300c-0.800 0-1-0.500-1-1z" fill="#555"/></svg>
<div class="r" style="left:663px;top:573px;width:30px;height:2px;background:#8ecbf0;"></div>
<svg class="r" style="left:864px;top:556px;" width="10" height="6" viewBox="0 0 10 6"><path d="M0.500 5.500l4.500-4.500 4.500 4.500" fill="none" stroke="#fff" stroke-width="1.200"/></svg>
<svg class="r" style="left:880px;top:555px;" width="13" height="10" viewBox="0 0 13 10"><path d="M3.500 2.500h8.500v6h-9.500v-3.500" fill="none" stroke="#fff" stroke-width="1"/><path d="M0.500 0.500h3v4h-3z M1.200 4.500v2" fill="none" stroke="#fff" stroke-width="0.900"/></svg>
<svg class="r" style="left:898px;top:555px;" width="13" height="11" viewBox="0 0 13 11"><path d="M3.500 0.500h9v6h-9z" fill="none" stroke="#fff" stroke-width="1"/><path d="M8 6.500v3M5 10h6" stroke="#fff" stroke-width="1"/><path d="M0.500 2h3v5h-3z" fill="#0b171b" stroke="#fff" stroke-width="0.900"/></svg>
<svg class="r" style="left:916px;top:554px;" width="14" height="12" viewBox="0 0 14 12"><path d="M0.500 4h2.500l3-3v10l-3-3h-2.500z" fill="none" stroke="#fff" stroke-width="1"/><path d="M8 4a3 3 0 0 1 0 4M9.800 2.500a5 5 0 0 1 0 7M11.600 1a7 7 0 0 1 0 10" fill="none" stroke="#fff" stroke-width="0.900"/></svg>
<div class="t" style="top:547.00px;font-size:8.4px;line-height:12px;color:#fff;left:857.00px;width:200px;text-align:center;-webkit-text-stroke:0;">22.24</div>
<div class="t" style="top:560.00px;font-size:8.6px;line-height:12px;color:#fff;left:857.00px;width:200px;text-align:center;-webkit-text-stroke:0;">29/02/2020</div>
<svg class="r" style="left:993px;top:555px;" width="13" height="13" viewBox="0 0 13 13"><path d="M0.500 0.500h11v8.500h-3l-2.500 2.800v-2.800h-5.500z" fill="#fff"/><path d="M2.500 3h7M2.500 5h7M2.500 7h4" stroke="#0b171b" stroke-width="0.800"/></svg>
<div class="r" style="left:1019px;top:545px;width:1px;height:30px;background:#4a5a60;"></div>
</div></body></html>
